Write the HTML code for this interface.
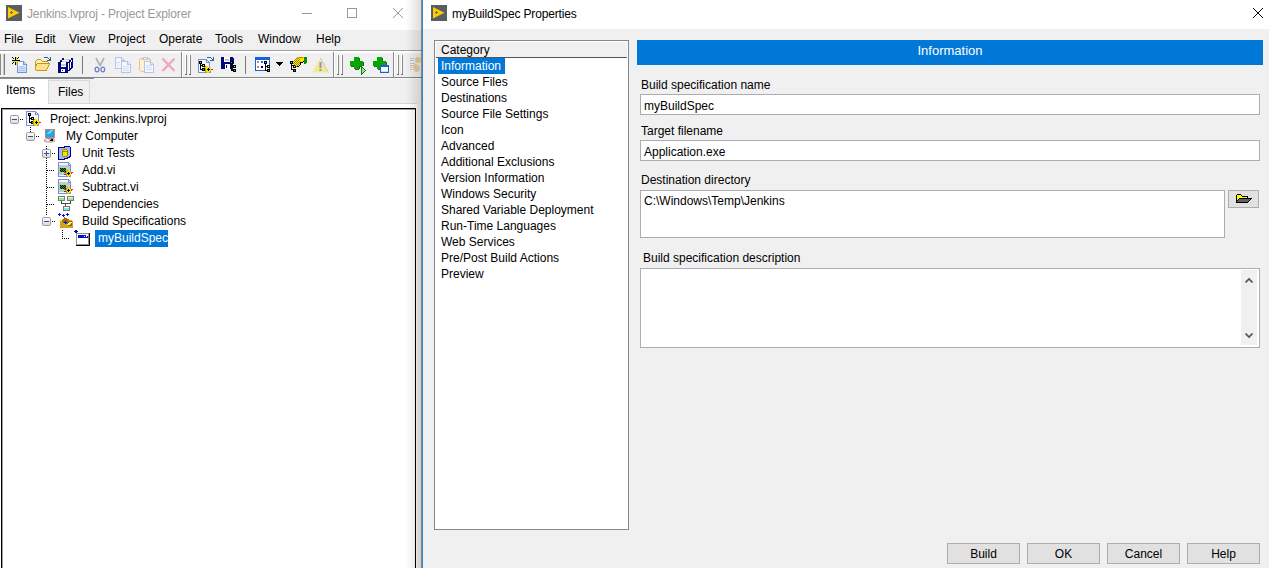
<!DOCTYPE html>
<html><head><meta charset="utf-8">
<style>
*{margin:0;padding:0;box-sizing:border-box}
html,body{width:1269px;height:568px;overflow:hidden;background:#fff;font-family:"Liberation Sans",sans-serif;font-size:12px;color:#000}
.a{position:absolute;display:block}
.t{position:absolute;white-space:nowrap;line-height:14px}
</style></head><body>
<div class="a" style="left:0px;top:0px;width:422px;height:30px;background:#fff"></div>
<svg class="a" style="left:6px;top:5px" width="16" height="16" viewBox="0 0 16 16"><rect x="0" y="0" width="16" height="16" fill="#5a5d61"/><path d="M2 2 L13.5 7.75 L2 13.5 Z" fill="#ffcc00"/><path d="M4 7.5h3M5.5 6v3" stroke="#6a6a6a" stroke-width="1"/></svg>
<div class="t" style="left:27px;top:7px;color:#999;letter-spacing:-0.14px">Jenkins.lvproj - Project Explorer</div>
<svg class="a" style="left:302px;top:13px" width="10" height="1" viewBox="0 0 10 1" shape-rendering="crispEdges"><rect width="10" height="1" fill="#999"/></svg>
<svg class="a" style="left:347px;top:8px" width="10" height="10" viewBox="0 0 10 10" shape-rendering="crispEdges"><rect x="0.5" y="0.5" width="9" height="9" fill="none" stroke="#999"/></svg>
<svg class="a" style="left:393px;top:8px" width="10" height="10" viewBox="0 0 10 10"><path d="M0 0L10 10M10 0L0 10" stroke="#999" stroke-width="1"/></svg>
<div class="a" style="left:0px;top:30px;width:422px;height:20px;background:#f0f0f0"></div>
<div class="t" style="left:4px;top:32px;">File</div>
<div class="t" style="left:35px;top:32px;">Edit</div>
<div class="t" style="left:69px;top:32px;">View</div>
<div class="t" style="left:108px;top:32px;">Project</div>
<div class="t" style="left:159px;top:32px;">Operate</div>
<div class="t" style="left:215px;top:32px;">Tools</div>
<div class="t" style="left:258px;top:32px;">Window</div>
<div class="t" style="left:316px;top:32px;">Help</div>
<div class="a" style="left:0px;top:50px;width:422px;height:1px;background:#a0a0a0"></div>
<div class="a" style="left:0px;top:51px;width:422px;height:2px;background:#fff"></div>
<div class="a" style="left:0px;top:53px;width:422px;height:24px;background:#f0f0f0"></div>
<div class="a" style="left:0px;top:77px;width:422px;height:1px;background:#858585"></div>
<div class="a" style="left:0px;top:54px;width:1px;height:21px;background:#8a8a8a"></div>
<div class="a" style="left:3px;top:54px;width:1px;height:21px;background:#c8c8c8"></div>
<div class="a" style="left:4px;top:54px;width:1px;height:21px;background:#7a7a7a"></div>
<div class="a" style="left:181px;top:52px;width:1px;height:25px;background:#8a8a8a"></div>
<div class="a" style="left:182px;top:52px;width:1px;height:25px;background:#fff"></div>
<div class="a" style="left:333px;top:52px;width:1px;height:25px;background:#8a8a8a"></div>
<div class="a" style="left:334px;top:52px;width:1px;height:25px;background:#fff"></div>
<div class="a" style="left:393px;top:52px;width:1px;height:25px;background:#8a8a8a"></div>
<div class="a" style="left:394px;top:52px;width:1px;height:25px;background:#fff"></div>
<div class="a" style="left:186px;top:55px;width:1px;height:20px;background:#8a8a8a"></div>
<div class="a" style="left:185px;top:55px;width:1px;height:20px;background:#fff"></div>
<div class="a" style="left:185px;top:74px;width:2px;height:1px;background:#6a6a6a"></div>
<div class="a" style="left:190px;top:55px;width:1px;height:20px;background:#8a8a8a"></div>
<div class="a" style="left:189px;top:55px;width:1px;height:20px;background:#fff"></div>
<div class="a" style="left:189px;top:74px;width:2px;height:1px;background:#6a6a6a"></div>
<div class="a" style="left:338px;top:55px;width:1px;height:20px;background:#8a8a8a"></div>
<div class="a" style="left:337px;top:55px;width:1px;height:20px;background:#fff"></div>
<div class="a" style="left:337px;top:74px;width:2px;height:1px;background:#6a6a6a"></div>
<div class="a" style="left:342px;top:55px;width:1px;height:20px;background:#8a8a8a"></div>
<div class="a" style="left:341px;top:55px;width:1px;height:20px;background:#fff"></div>
<div class="a" style="left:341px;top:74px;width:2px;height:1px;background:#6a6a6a"></div>
<div class="a" style="left:398px;top:55px;width:1px;height:20px;background:#8a8a8a"></div>
<div class="a" style="left:397px;top:55px;width:1px;height:20px;background:#fff"></div>
<div class="a" style="left:397px;top:74px;width:2px;height:1px;background:#6a6a6a"></div>
<div class="a" style="left:402px;top:55px;width:1px;height:20px;background:#8a8a8a"></div>
<div class="a" style="left:401px;top:55px;width:1px;height:20px;background:#fff"></div>
<div class="a" style="left:401px;top:74px;width:2px;height:1px;background:#6a6a6a"></div>
<div class="a" style="left:82px;top:56px;width:1px;height:18px;background:#7a7a7a"></div>
<div class="a" style="left:245px;top:56px;width:1px;height:18px;background:#7a7a7a"></div>
<svg class="a" style="left:10px;top:55px" width="20" height="18" viewBox="0 0 20 18" shape-rendering="crispEdges"><rect x="2" y="2" width="1" height="1" fill="#000"/><rect x="5" y="2" width="1" height="1" fill="#000"/><rect x="6" y="2" width="1" height="1" fill="#f4e400"/><rect x="8" y="2" width="1" height="1" fill="#000"/><rect x="3" y="3" width="1" height="1" fill="#000"/><rect x="5" y="3" width="1" height="1" fill="#000"/><rect x="6" y="3" width="1" height="1" fill="#f4e400"/><rect x="7" y="3" width="1" height="1" fill="#000"/><rect x="5" y="4" width="1" height="1" fill="#000"/><rect x="6" y="4" width="1" height="1" fill="#f4e400"/><rect x="2" y="5" width="8" height="1" fill="#000"/><rect x="2" y="6" width="7" height="1" fill="#f4e400"/><rect x="9" y="6" width="5" height="1" fill="#7b8fd4"/><rect x="3" y="7" width="1" height="1" fill="#000"/><rect x="5" y="7" width="1" height="1" fill="#000"/><rect x="6" y="7" width="1" height="1" fill="#f4e400"/><rect x="7" y="7" width="1" height="1" fill="#7b8fd4"/><rect x="8" y="7" width="5" height="1" fill="#f2f6ff"/><rect x="13" y="7" width="2" height="1" fill="#7b8fd4"/><rect x="2" y="8" width="1" height="1" fill="#000"/><rect x="5" y="8" width="1" height="1" fill="#000"/><rect x="6" y="8" width="1" height="1" fill="#f4e400"/><rect x="7" y="8" width="1" height="1" fill="#7b8fd4"/><rect x="8" y="8" width="5" height="1" fill="#f2f6ff"/><rect x="13" y="8" width="1" height="1" fill="#7b8fd4"/><rect x="14" y="8" width="1" height="1" fill="#f2f6ff"/><rect x="15" y="8" width="1" height="1" fill="#7b8fd4"/><rect x="5" y="9" width="1" height="1" fill="#000"/><rect x="6" y="9" width="1" height="1" fill="#f4e400"/><rect x="7" y="9" width="1" height="1" fill="#7b8fd4"/><rect x="8" y="9" width="5" height="1" fill="#f2f6ff"/><rect x="13" y="9" width="4" height="1" fill="#7b8fd4"/><rect x="7" y="10" width="1" height="1" fill="#7b8fd4"/><rect x="8" y="10" width="8" height="1" fill="#f2f6ff"/><rect x="16" y="10" width="1" height="1" fill="#7b8fd4"/><rect x="7" y="11" width="1" height="1" fill="#7b8fd4"/><rect x="8" y="11" width="1" height="1" fill="#f2f6ff"/><rect x="9" y="11" width="6" height="1" fill="#a8c4ec"/><rect x="15" y="11" width="1" height="1" fill="#f2f6ff"/><rect x="16" y="11" width="1" height="1" fill="#7b8fd4"/><rect x="7" y="12" width="1" height="1" fill="#7b8fd4"/><rect x="8" y="12" width="8" height="1" fill="#d4e2f8"/><rect x="16" y="12" width="1" height="1" fill="#7b8fd4"/><rect x="7" y="13" width="1" height="1" fill="#7b8fd4"/><rect x="8" y="13" width="1" height="1" fill="#d4e2f8"/><rect x="9" y="13" width="6" height="1" fill="#a8c4ec"/><rect x="15" y="13" width="1" height="1" fill="#d4e2f8"/><rect x="16" y="13" width="1" height="1" fill="#7b8fd4"/><rect x="7" y="14" width="1" height="1" fill="#7b8fd4"/><rect x="8" y="14" width="8" height="1" fill="#d4e2f8"/><rect x="16" y="14" width="1" height="1" fill="#7b8fd4"/><rect x="7" y="15" width="1" height="1" fill="#7b8fd4"/><rect x="8" y="15" width="1" height="1" fill="#d4e2f8"/><rect x="9" y="15" width="6" height="1" fill="#a8c4ec"/><rect x="15" y="15" width="1" height="1" fill="#d4e2f8"/><rect x="16" y="15" width="1" height="1" fill="#7b8fd4"/><rect x="7" y="16" width="1" height="1" fill="#7b8fd4"/><rect x="8" y="16" width="8" height="1" fill="#d4e2f8"/><rect x="16" y="16" width="1" height="1" fill="#7b8fd4"/><rect x="7" y="17" width="10" height="1" fill="#7b8fd4"/></svg>
<svg class="a" style="left:33px;top:55px" width="20" height="16" viewBox="0 0 20 16" shape-rendering="crispEdges"><rect x="11" y="2" width="4" height="1" fill="#1e6e96"/><rect x="17" y="2" width="1" height="1" fill="#1e6e96"/><rect x="15" y="3" width="1" height="1" fill="#1e6e96"/><rect x="17" y="3" width="1" height="1" fill="#1e6e96"/><rect x="4" y="4" width="4" height="1" fill="#c89418"/><rect x="16" y="4" width="2" height="1" fill="#1e6e96"/><rect x="3" y="5" width="1" height="1" fill="#c89418"/><rect x="4" y="5" width="4" height="1" fill="#fff2b0"/><rect x="8" y="5" width="1" height="1" fill="#c89418"/><rect x="14" y="5" width="4" height="1" fill="#1e6e96"/><rect x="2" y="6" width="1" height="1" fill="#c89418"/><rect x="3" y="6" width="6" height="1" fill="#fff2b0"/><rect x="9" y="6" width="6" height="1" fill="#c89418"/><rect x="2" y="7" width="1" height="1" fill="#c89418"/><rect x="3" y="7" width="12" height="1" fill="#fff2b0"/><rect x="15" y="7" width="1" height="1" fill="#c89418"/><rect x="2" y="8" width="1" height="1" fill="#c89418"/><rect x="3" y="8" width="1" height="1" fill="#fff2b0"/><rect x="4" y="8" width="13" height="1" fill="#c89418"/><rect x="2" y="9" width="2" height="1" fill="#c89418"/><rect x="4" y="9" width="12" height="1" fill="#fbe38a"/><rect x="16" y="9" width="1" height="1" fill="#c89418"/><rect x="2" y="10" width="2" height="1" fill="#c89418"/><rect x="4" y="10" width="11" height="1" fill="#fbe38a"/><rect x="15" y="10" width="1" height="1" fill="#c89418"/><rect x="2" y="11" width="1" height="1" fill="#c89418"/><rect x="3" y="11" width="12" height="1" fill="#fbe38a"/><rect x="15" y="11" width="1" height="1" fill="#c89418"/><rect x="2" y="12" width="1" height="1" fill="#c89418"/><rect x="3" y="12" width="11" height="1" fill="#fbe38a"/><rect x="14" y="12" width="1" height="1" fill="#c89418"/><rect x="2" y="13" width="1" height="1" fill="#c89418"/><rect x="3" y="13" width="11" height="1" fill="#fbe38a"/><rect x="14" y="13" width="1" height="1" fill="#c89418"/><rect x="2" y="14" width="1" height="1" fill="#c89418"/><rect x="3" y="14" width="10" height="1" fill="#fbe38a"/><rect x="13" y="14" width="1" height="1" fill="#c89418"/><rect x="3" y="15" width="11" height="1" fill="#c89418"/></svg>
<svg class="a" style="left:56px;top:55px" width="20" height="18" viewBox="0 0 20 18" shape-rendering="crispEdges"><rect x="6" y="3" width="2" height="1" fill="#00087a"/><rect x="8" y="3" width="7" height="1" fill="#ffffff"/><rect x="15" y="3" width="2" height="1" fill="#00087a"/><rect x="6" y="4" width="2" height="1" fill="#00087a"/><rect x="8" y="4" width="7" height="1" fill="#c8c8d0"/><rect x="15" y="4" width="2" height="1" fill="#00087a"/><rect x="4" y="5" width="2" height="1" fill="#00087a"/><rect x="6" y="5" width="7" height="1" fill="#ffffff"/><rect x="13" y="5" width="2" height="1" fill="#00087a"/><rect x="15" y="5" width="1" height="1" fill="#ffffff"/><rect x="16" y="5" width="1" height="1" fill="#00087a"/><rect x="4" y="6" width="2" height="1" fill="#00087a"/><rect x="6" y="6" width="7" height="1" fill="#c8c8d0"/><rect x="13" y="6" width="2" height="1" fill="#00087a"/><rect x="15" y="6" width="1" height="1" fill="#ffffff"/><rect x="16" y="6" width="1" height="1" fill="#00087a"/><rect x="2" y="7" width="3" height="1" fill="#00087a"/><rect x="5" y="7" width="5" height="1" fill="#ffffff"/><rect x="10" y="7" width="4" height="1" fill="#00087a"/><rect x="14" y="7" width="1" height="1" fill="#ffffff"/><rect x="15" y="7" width="2" height="1" fill="#00087a"/><rect x="2" y="8" width="3" height="1" fill="#00087a"/><rect x="5" y="8" width="5" height="1" fill="#ffffff"/><rect x="10" y="8" width="2" height="1" fill="#00087a"/><rect x="12" y="8" width="1" height="1" fill="#ffffff"/><rect x="13" y="8" width="1" height="1" fill="#00087a"/><rect x="14" y="8" width="1" height="1" fill="#ffffff"/><rect x="15" y="8" width="2" height="1" fill="#00087a"/><rect x="2" y="9" width="3" height="1" fill="#00087a"/><rect x="5" y="9" width="5" height="1" fill="#c8c8d0"/><rect x="10" y="9" width="2" height="1" fill="#00087a"/><rect x="12" y="9" width="1" height="1" fill="#ffffff"/><rect x="13" y="9" width="1" height="1" fill="#00087a"/><rect x="14" y="9" width="1" height="1" fill="#ffffff"/><rect x="15" y="9" width="2" height="1" fill="#00087a"/><rect x="2" y="10" width="3" height="1" fill="#00087a"/><rect x="5" y="10" width="5" height="1" fill="#c8c8d0"/><rect x="10" y="10" width="2" height="1" fill="#00087a"/><rect x="12" y="10" width="1" height="1" fill="#ffffff"/><rect x="13" y="10" width="1" height="1" fill="#00087a"/><rect x="14" y="10" width="1" height="1" fill="#ffffff"/><rect x="15" y="10" width="2" height="1" fill="#00087a"/><rect x="2" y="11" width="3" height="1" fill="#00087a"/><rect x="5" y="11" width="5" height="1" fill="#ffffff"/><rect x="10" y="11" width="2" height="1" fill="#00087a"/><rect x="12" y="11" width="1" height="1" fill="#ffffff"/><rect x="13" y="11" width="1" height="1" fill="#00087a"/><rect x="14" y="11" width="1" height="1" fill="#ffffff"/><rect x="15" y="11" width="2" height="1" fill="#00087a"/><rect x="2" y="12" width="10" height="1" fill="#00087a"/><rect x="12" y="12" width="1" height="1" fill="#ffffff"/><rect x="13" y="12" width="1" height="1" fill="#00087a"/><rect x="14" y="12" width="1" height="1" fill="#ffffff"/><rect x="15" y="12" width="2" height="1" fill="#00087a"/><rect x="2" y="13" width="10" height="1" fill="#00087a"/><rect x="12" y="13" width="1" height="1" fill="#ffffff"/><rect x="13" y="13" width="3" height="1" fill="#00087a"/><rect x="2" y="14" width="3" height="1" fill="#00087a"/><rect x="5" y="14" width="4" height="1" fill="#ffffff"/><rect x="9" y="14" width="3" height="1" fill="#00087a"/><rect x="12" y="14" width="1" height="1" fill="#ffffff"/><rect x="13" y="14" width="2" height="1" fill="#00087a"/><rect x="2" y="15" width="3" height="1" fill="#00087a"/><rect x="5" y="15" width="1" height="1" fill="#ffffff"/><rect x="6" y="15" width="1" height="1" fill="#00087a"/><rect x="7" y="15" width="2" height="1" fill="#ffffff"/><rect x="9" y="15" width="5" height="1" fill="#00087a"/><rect x="2" y="16" width="3" height="1" fill="#00087a"/><rect x="5" y="16" width="4" height="1" fill="#ffffff"/><rect x="9" y="16" width="3" height="1" fill="#00087a"/><rect x="2" y="17" width="10" height="1" fill="#00087a"/></svg>
<svg class="a" style="left:92px;top:55px" width="20" height="20" viewBox="0 0 20 20"><path d="M4 3L8.3 11M12 3L7.7 11" stroke="#b4b4b4" stroke-width="1.8" fill="none"/><ellipse cx="5" cy="14.5" rx="1.9" ry="2.4" fill="none" stroke="#6e80c8" stroke-width="1.3"/><ellipse cx="10.8" cy="14.5" rx="1.9" ry="2.4" fill="none" stroke="#6e80c8" stroke-width="1.3"/></svg>
<svg class="a" style="left:113px;top:55px" width="20" height="18" viewBox="0 0 20 18" shape-rendering="crispEdges"><rect x="2" y="2" width="7" height="1" fill="#bcc4e4"/><rect x="2" y="3" width="1" height="1" fill="#bcc4e4"/><rect x="3" y="3" width="5" height="1" fill="#f2f6ff"/><rect x="8" y="3" width="2" height="1" fill="#bcc4e4"/><rect x="2" y="4" width="1" height="1" fill="#bcc4e4"/><rect x="3" y="4" width="5" height="1" fill="#f2f6ff"/><rect x="8" y="4" width="1" height="1" fill="#bcc4e4"/><rect x="9" y="4" width="1" height="1" fill="#f2f6ff"/><rect x="10" y="4" width="1" height="1" fill="#bcc4e4"/><rect x="2" y="5" width="1" height="1" fill="#bcc4e4"/><rect x="3" y="5" width="5" height="1" fill="#f2f6ff"/><rect x="8" y="5" width="4" height="1" fill="#bcc4e4"/><rect x="2" y="6" width="1" height="1" fill="#bcc4e4"/><rect x="3" y="6" width="5" height="1" fill="#f2f6ff"/><rect x="8" y="6" width="7" height="1" fill="#bcc4e4"/><rect x="2" y="7" width="1" height="1" fill="#bcc4e4"/><rect x="3" y="7" width="4" height="1" fill="#cfe0f6"/><rect x="7" y="7" width="1" height="1" fill="#f2f6ff"/><rect x="8" y="7" width="1" height="1" fill="#bcc4e4"/><rect x="9" y="7" width="5" height="1" fill="#f2f6ff"/><rect x="14" y="7" width="2" height="1" fill="#bcc4e4"/><rect x="2" y="8" width="1" height="1" fill="#bcc4e4"/><rect x="3" y="8" width="5" height="1" fill="#f2f6ff"/><rect x="8" y="8" width="1" height="1" fill="#bcc4e4"/><rect x="9" y="8" width="5" height="1" fill="#f2f6ff"/><rect x="14" y="8" width="1" height="1" fill="#bcc4e4"/><rect x="15" y="8" width="1" height="1" fill="#f2f6ff"/><rect x="16" y="8" width="1" height="1" fill="#bcc4e4"/><rect x="2" y="9" width="1" height="1" fill="#bcc4e4"/><rect x="3" y="9" width="5" height="1" fill="#f2f6ff"/><rect x="8" y="9" width="1" height="1" fill="#bcc4e4"/><rect x="9" y="9" width="5" height="1" fill="#f2f6ff"/><rect x="14" y="9" width="4" height="1" fill="#bcc4e4"/><rect x="2" y="10" width="1" height="1" fill="#bcc4e4"/><rect x="3" y="10" width="1" height="1" fill="#f2f6ff"/><rect x="4" y="10" width="2" height="1" fill="#cfe0f6"/><rect x="6" y="10" width="2" height="1" fill="#f2f6ff"/><rect x="8" y="10" width="1" height="1" fill="#bcc4e4"/><rect x="9" y="10" width="8" height="1" fill="#f2f6ff"/><rect x="17" y="10" width="1" height="1" fill="#bcc4e4"/><rect x="2" y="11" width="1" height="1" fill="#bcc4e4"/><rect x="3" y="11" width="5" height="1" fill="#f2f6ff"/><rect x="8" y="11" width="1" height="1" fill="#bcc4e4"/><rect x="9" y="11" width="1" height="1" fill="#f2f6ff"/><rect x="10" y="11" width="6" height="1" fill="#cfe0f6"/><rect x="16" y="11" width="1" height="1" fill="#f2f6ff"/><rect x="17" y="11" width="1" height="1" fill="#bcc4e4"/><rect x="2" y="12" width="1" height="1" fill="#bcc4e4"/><rect x="3" y="12" width="5" height="1" fill="#f2f6ff"/><rect x="8" y="12" width="1" height="1" fill="#bcc4e4"/><rect x="9" y="12" width="8" height="1" fill="#f2f6ff"/><rect x="17" y="12" width="1" height="1" fill="#bcc4e4"/><rect x="2" y="13" width="7" height="1" fill="#bcc4e4"/><rect x="9" y="13" width="1" height="1" fill="#f2f6ff"/><rect x="10" y="13" width="6" height="1" fill="#cfe0f6"/><rect x="16" y="13" width="1" height="1" fill="#f2f6ff"/><rect x="17" y="13" width="1" height="1" fill="#bcc4e4"/><rect x="8" y="14" width="1" height="1" fill="#bcc4e4"/><rect x="9" y="14" width="8" height="1" fill="#f2f6ff"/><rect x="17" y="14" width="1" height="1" fill="#bcc4e4"/><rect x="8" y="15" width="1" height="1" fill="#bcc4e4"/><rect x="9" y="15" width="1" height="1" fill="#f2f6ff"/><rect x="10" y="15" width="6" height="1" fill="#cfe0f6"/><rect x="16" y="15" width="1" height="1" fill="#f2f6ff"/><rect x="17" y="15" width="1" height="1" fill="#bcc4e4"/><rect x="8" y="16" width="1" height="1" fill="#bcc4e4"/><rect x="9" y="16" width="8" height="1" fill="#f2f6ff"/><rect x="17" y="16" width="1" height="1" fill="#bcc4e4"/><rect x="8" y="17" width="10" height="1" fill="#bcc4e4"/></svg>
<svg class="a" style="left:136px;top:55px" width="20" height="18" viewBox="0 0 20 18" shape-rendering="crispEdges"><rect x="7" y="2" width="5" height="1" fill="#c4c4c4"/><rect x="4" y="3" width="2" height="1" fill="#e2c690"/><rect x="6" y="3" width="2" height="1" fill="#c4c4c4"/><rect x="8" y="3" width="3" height="1" fill="#f2f6ff"/><rect x="11" y="3" width="2" height="1" fill="#c4c4c4"/><rect x="13" y="3" width="1" height="1" fill="#e2c690"/><rect x="3" y="4" width="1" height="1" fill="#e2c690"/><rect x="4" y="4" width="2" height="1" fill="#fbf3cf"/><rect x="6" y="4" width="6" height="1" fill="#c4c4c4"/><rect x="12" y="4" width="1" height="1" fill="#fbf3cf"/><rect x="13" y="4" width="2" height="1" fill="#e2c690"/><rect x="3" y="5" width="1" height="1" fill="#e2c690"/><rect x="4" y="5" width="10" height="1" fill="#fbf3cf"/><rect x="14" y="5" width="1" height="1" fill="#e2c690"/><rect x="3" y="6" width="1" height="1" fill="#e2c690"/><rect x="4" y="6" width="4" height="1" fill="#fbf3cf"/><rect x="8" y="6" width="7" height="1" fill="#bcc4e4"/><rect x="3" y="7" width="1" height="1" fill="#e2c690"/><rect x="4" y="7" width="4" height="1" fill="#fbf3cf"/><rect x="8" y="7" width="1" height="1" fill="#bcc4e4"/><rect x="9" y="7" width="5" height="1" fill="#f2f6ff"/><rect x="14" y="7" width="2" height="1" fill="#bcc4e4"/><rect x="3" y="8" width="1" height="1" fill="#e2c690"/><rect x="4" y="8" width="4" height="1" fill="#fbf3cf"/><rect x="8" y="8" width="1" height="1" fill="#bcc4e4"/><rect x="9" y="8" width="5" height="1" fill="#f2f6ff"/><rect x="14" y="8" width="1" height="1" fill="#bcc4e4"/><rect x="15" y="8" width="1" height="1" fill="#f2f6ff"/><rect x="16" y="8" width="1" height="1" fill="#bcc4e4"/><rect x="3" y="9" width="1" height="1" fill="#e2c690"/><rect x="4" y="9" width="4" height="1" fill="#fbf3cf"/><rect x="8" y="9" width="1" height="1" fill="#bcc4e4"/><rect x="9" y="9" width="5" height="1" fill="#f2f6ff"/><rect x="14" y="9" width="4" height="1" fill="#bcc4e4"/><rect x="3" y="10" width="1" height="1" fill="#e2c690"/><rect x="4" y="10" width="4" height="1" fill="#fbf3cf"/><rect x="8" y="10" width="1" height="1" fill="#bcc4e4"/><rect x="9" y="10" width="1" height="1" fill="#f2f6ff"/><rect x="10" y="10" width="6" height="1" fill="#cfe0f6"/><rect x="16" y="10" width="1" height="1" fill="#f2f6ff"/><rect x="17" y="10" width="1" height="1" fill="#bcc4e4"/><rect x="3" y="11" width="1" height="1" fill="#e2c690"/><rect x="4" y="11" width="4" height="1" fill="#fbf3cf"/><rect x="8" y="11" width="1" height="1" fill="#bcc4e4"/><rect x="9" y="11" width="8" height="1" fill="#f2f6ff"/><rect x="17" y="11" width="1" height="1" fill="#bcc4e4"/><rect x="3" y="12" width="1" height="1" fill="#e2c690"/><rect x="4" y="12" width="4" height="1" fill="#fbf3cf"/><rect x="8" y="12" width="1" height="1" fill="#bcc4e4"/><rect x="9" y="12" width="1" height="1" fill="#f2f6ff"/><rect x="10" y="12" width="6" height="1" fill="#cfe0f6"/><rect x="16" y="12" width="1" height="1" fill="#f2f6ff"/><rect x="17" y="12" width="1" height="1" fill="#bcc4e4"/><rect x="3" y="13" width="1" height="1" fill="#e2c690"/><rect x="4" y="13" width="4" height="1" fill="#fbf3cf"/><rect x="8" y="13" width="1" height="1" fill="#bcc4e4"/><rect x="9" y="13" width="8" height="1" fill="#f2f6ff"/><rect x="17" y="13" width="1" height="1" fill="#bcc4e4"/><rect x="3" y="14" width="1" height="1" fill="#e2c690"/><rect x="4" y="14" width="4" height="1" fill="#fbf3cf"/><rect x="8" y="14" width="1" height="1" fill="#bcc4e4"/><rect x="9" y="14" width="1" height="1" fill="#f2f6ff"/><rect x="10" y="14" width="6" height="1" fill="#cfe0f6"/><rect x="16" y="14" width="1" height="1" fill="#f2f6ff"/><rect x="17" y="14" width="1" height="1" fill="#bcc4e4"/><rect x="4" y="15" width="1" height="1" fill="#e2c690"/><rect x="5" y="15" width="3" height="1" fill="#fbf3cf"/><rect x="8" y="15" width="1" height="1" fill="#bcc4e4"/><rect x="9" y="15" width="8" height="1" fill="#f2f6ff"/><rect x="17" y="15" width="1" height="1" fill="#bcc4e4"/><rect x="5" y="16" width="3" height="1" fill="#e2c690"/><rect x="8" y="16" width="1" height="1" fill="#bcc4e4"/><rect x="9" y="16" width="8" height="1" fill="#f2f6ff"/><rect x="17" y="16" width="1" height="1" fill="#bcc4e4"/><rect x="8" y="17" width="10" height="1" fill="#bcc4e4"/></svg>
<svg class="a" style="left:159px;top:55px" width="20" height="20" viewBox="0 0 20 20"><path d="M3.5 3.5L15.5 16M15.5 3.5L3.5 16" stroke="#f2a6ba" stroke-width="2.4"/></svg>
<svg class="a" style="left:196px;top:55px" width="20" height="18" viewBox="0 0 20 18" shape-rendering="crispEdges"><rect x="11" y="2" width="4" height="1" fill="#1e6e96"/><rect x="17" y="2" width="1" height="1" fill="#1e6e96"/><rect x="15" y="3" width="1" height="1" fill="#1e6e96"/><rect x="17" y="3" width="1" height="1" fill="#1e6e96"/><rect x="2" y="4" width="9" height="1" fill="#7b8fd4"/><rect x="16" y="4" width="2" height="1" fill="#1e6e96"/><rect x="2" y="5" width="1" height="1" fill="#7b8fd4"/><rect x="3" y="5" width="7" height="1" fill="#f2f6ff"/><rect x="10" y="5" width="2" height="1" fill="#7b8fd4"/><rect x="14" y="5" width="4" height="1" fill="#1e6e96"/><rect x="2" y="6" width="1" height="1" fill="#7b8fd4"/><rect x="3" y="6" width="3" height="1" fill="#000"/><rect x="6" y="6" width="4" height="1" fill="#f2f6ff"/><rect x="10" y="6" width="1" height="1" fill="#7b8fd4"/><rect x="11" y="6" width="1" height="1" fill="#f2f6ff"/><rect x="12" y="6" width="1" height="1" fill="#7b8fd4"/><rect x="2" y="7" width="1" height="1" fill="#7b8fd4"/><rect x="3" y="7" width="1" height="1" fill="#000"/><rect x="4" y="7" width="1" height="1" fill="#00e0f0"/><rect x="5" y="7" width="1" height="1" fill="#000"/><rect x="6" y="7" width="4" height="1" fill="#f2f6ff"/><rect x="10" y="7" width="4" height="1" fill="#7b8fd4"/><rect x="2" y="8" width="1" height="1" fill="#7b8fd4"/><rect x="3" y="8" width="3" height="1" fill="#000"/><rect x="6" y="8" width="7" height="1" fill="#f2f6ff"/><rect x="13" y="8" width="1" height="1" fill="#7b8fd4"/><rect x="2" y="9" width="1" height="1" fill="#7b8fd4"/><rect x="3" y="9" width="1" height="1" fill="#f2f6ff"/><rect x="4" y="9" width="1" height="1" fill="#000"/><rect x="5" y="9" width="1" height="1" fill="#f2f6ff"/><rect x="6" y="9" width="3" height="1" fill="#000"/><rect x="9" y="9" width="4" height="1" fill="#f2f6ff"/><rect x="13" y="9" width="1" height="1" fill="#7b8fd4"/><rect x="2" y="10" width="1" height="1" fill="#7b8fd4"/><rect x="3" y="10" width="1" height="1" fill="#f2f6ff"/><rect x="4" y="10" width="3" height="1" fill="#000"/><rect x="7" y="10" width="1" height="1" fill="#f0f000"/><rect x="8" y="10" width="1" height="1" fill="#000"/><rect x="9" y="10" width="4" height="1" fill="#f2f6ff"/><rect x="13" y="10" width="1" height="1" fill="#7b8fd4"/><rect x="2" y="11" width="1" height="1" fill="#7b8fd4"/><rect x="3" y="11" width="1" height="1" fill="#f2f6ff"/><rect x="4" y="11" width="1" height="1" fill="#000"/><rect x="5" y="11" width="1" height="1" fill="#f2f6ff"/><rect x="6" y="11" width="3" height="1" fill="#000"/><rect x="9" y="11" width="1" height="1" fill="#c0a000"/><rect x="10" y="11" width="2" height="1" fill="#f4e400"/><rect x="12" y="11" width="1" height="1" fill="#f2f6ff"/><rect x="13" y="11" width="1" height="1" fill="#7b8fd4"/><rect x="2" y="12" width="1" height="1" fill="#7b8fd4"/><rect x="3" y="12" width="1" height="1" fill="#f2f6ff"/><rect x="4" y="12" width="1" height="1" fill="#000"/><rect x="5" y="12" width="3" height="1" fill="#f2f6ff"/><rect x="8" y="12" width="1" height="1" fill="#c0a000"/><rect x="9" y="12" width="4" height="1" fill="#f4e400"/><rect x="13" y="12" width="1" height="1" fill="#7b8fd4"/><rect x="2" y="13" width="1" height="1" fill="#7b8fd4"/><rect x="3" y="13" width="1" height="1" fill="#f2f6ff"/><rect x="4" y="13" width="1" height="1" fill="#000"/><rect x="5" y="13" width="1" height="1" fill="#f2f6ff"/><rect x="6" y="13" width="3" height="1" fill="#000"/><rect x="9" y="13" width="1" height="1" fill="#c0a000"/><rect x="10" y="13" width="2" height="1" fill="#f4e400"/><rect x="12" y="13" width="1" height="1" fill="#000"/><rect x="13" y="13" width="2" height="1" fill="#f4e400"/><rect x="2" y="14" width="1" height="1" fill="#7b8fd4"/><rect x="3" y="14" width="1" height="1" fill="#f2f6ff"/><rect x="4" y="14" width="3" height="1" fill="#000"/><rect x="7" y="14" width="1" height="1" fill="#00d800"/><rect x="8" y="14" width="1" height="1" fill="#000"/><rect x="9" y="14" width="1" height="1" fill="#c0a000"/><rect x="10" y="14" width="1" height="1" fill="#f4e400"/><rect x="11" y="14" width="3" height="1" fill="#000"/><rect x="14" y="14" width="1" height="1" fill="#f4e400"/><rect x="15" y="14" width="2" height="1" fill="#ff2020"/><rect x="2" y="15" width="1" height="1" fill="#7b8fd4"/><rect x="3" y="15" width="3" height="1" fill="#f2f6ff"/><rect x="6" y="15" width="3" height="1" fill="#000"/><rect x="9" y="15" width="1" height="1" fill="#c0a000"/><rect x="10" y="15" width="2" height="1" fill="#f4e400"/><rect x="12" y="15" width="1" height="1" fill="#000"/><rect x="13" y="15" width="2" height="1" fill="#f4e400"/><rect x="2" y="16" width="1" height="1" fill="#7b8fd4"/><rect x="3" y="16" width="6" height="1" fill="#f2f6ff"/><rect x="9" y="16" width="1" height="1" fill="#c0a000"/><rect x="10" y="16" width="4" height="1" fill="#f4e400"/><rect x="14" y="16" width="1" height="1" fill="#7b8fd4"/><rect x="2" y="17" width="8" height="1" fill="#7b8fd4"/><rect x="10" y="17" width="1" height="1" fill="#c0a000"/><rect x="11" y="17" width="2" height="1" fill="#f4e400"/><rect x="13" y="17" width="2" height="1" fill="#7b8fd4"/></svg>
<svg class="a" style="left:219px;top:55px" width="20" height="17" viewBox="0 0 20 17" shape-rendering="crispEdges"><rect x="2" y="2" width="3" height="1" fill="#00087a"/><rect x="5" y="2" width="6" height="1" fill="#ffffff"/><rect x="11" y="2" width="3" height="1" fill="#00087a"/><rect x="2" y="3" width="3" height="1" fill="#00087a"/><rect x="5" y="3" width="6" height="1" fill="#ffffff"/><rect x="11" y="3" width="4" height="1" fill="#00087a"/><rect x="2" y="4" width="3" height="1" fill="#00087a"/><rect x="5" y="4" width="1" height="1" fill="#ffffff"/><rect x="6" y="4" width="4" height="1" fill="#c8c8d0"/><rect x="10" y="4" width="1" height="1" fill="#ffffff"/><rect x="11" y="4" width="4" height="1" fill="#00087a"/><rect x="2" y="5" width="3" height="1" fill="#00087a"/><rect x="5" y="5" width="1" height="1" fill="#ffffff"/><rect x="6" y="5" width="4" height="1" fill="#c8c8d0"/><rect x="10" y="5" width="1" height="1" fill="#ffffff"/><rect x="11" y="5" width="4" height="1" fill="#00087a"/><rect x="2" y="6" width="3" height="1" fill="#00087a"/><rect x="5" y="6" width="6" height="1" fill="#ffffff"/><rect x="11" y="6" width="3" height="1" fill="#000"/><rect x="14" y="6" width="1" height="1" fill="#00087a"/><rect x="2" y="7" width="9" height="1" fill="#00087a"/><rect x="11" y="7" width="1" height="1" fill="#000"/><rect x="12" y="7" width="1" height="1" fill="#00e0f0"/><rect x="13" y="7" width="1" height="1" fill="#000"/><rect x="14" y="7" width="1" height="1" fill="#00087a"/><rect x="2" y="8" width="9" height="1" fill="#00087a"/><rect x="11" y="8" width="3" height="1" fill="#000"/><rect x="14" y="8" width="1" height="1" fill="#00087a"/><rect x="2" y="9" width="4" height="1" fill="#00087a"/><rect x="6" y="9" width="5" height="1" fill="#ffffff"/><rect x="11" y="9" width="1" height="1" fill="#00087a"/><rect x="12" y="9" width="1" height="1" fill="#000"/><rect x="13" y="9" width="1" height="1" fill="#00087a"/><rect x="2" y="10" width="4" height="1" fill="#00087a"/><rect x="6" y="10" width="1" height="1" fill="#ffffff"/><rect x="7" y="10" width="1" height="1" fill="#00087a"/><rect x="8" y="10" width="3" height="1" fill="#ffffff"/><rect x="11" y="10" width="1" height="1" fill="#00087a"/><rect x="12" y="10" width="1" height="1" fill="#000"/><rect x="13" y="10" width="1" height="1" fill="#00087a"/><rect x="14" y="10" width="3" height="1" fill="#000"/><rect x="2" y="11" width="4" height="1" fill="#00087a"/><rect x="6" y="11" width="1" height="1" fill="#ffffff"/><rect x="7" y="11" width="1" height="1" fill="#00087a"/><rect x="8" y="11" width="3" height="1" fill="#ffffff"/><rect x="11" y="11" width="1" height="1" fill="#00087a"/><rect x="12" y="11" width="3" height="1" fill="#000"/><rect x="15" y="11" width="1" height="1" fill="#f0f000"/><rect x="16" y="11" width="1" height="1" fill="#000"/><rect x="2" y="12" width="4" height="1" fill="#00087a"/><rect x="6" y="12" width="1" height="1" fill="#ffffff"/><rect x="7" y="12" width="1" height="1" fill="#00087a"/><rect x="8" y="12" width="3" height="1" fill="#ffffff"/><rect x="11" y="12" width="1" height="1" fill="#00087a"/><rect x="12" y="12" width="1" height="1" fill="#000"/><rect x="13" y="12" width="1" height="1" fill="#00087a"/><rect x="14" y="12" width="3" height="1" fill="#000"/><rect x="2" y="13" width="4" height="1" fill="#00087a"/><rect x="6" y="13" width="5" height="1" fill="#ffffff"/><rect x="11" y="13" width="1" height="1" fill="#00087a"/><rect x="12" y="13" width="1" height="1" fill="#000"/><rect x="13" y="13" width="1" height="1" fill="#00087a"/><rect x="12" y="14" width="1" height="1" fill="#000"/><rect x="13" y="14" width="1" height="1" fill="#00087a"/><rect x="14" y="14" width="3" height="1" fill="#000"/><rect x="12" y="15" width="3" height="1" fill="#000"/><rect x="15" y="15" width="1" height="1" fill="#00d800"/><rect x="16" y="15" width="1" height="1" fill="#000"/><rect x="14" y="16" width="3" height="1" fill="#000"/></svg>
<svg class="a" style="left:253px;top:55px" width="20" height="17" viewBox="0 0 20 17" shape-rendering="crispEdges"><rect x="2" y="2" width="15" height="1" fill="#1c5ee0"/><rect x="2" y="3" width="15" height="1" fill="#1c5ee0"/><rect x="2" y="4" width="15" height="1" fill="#1c5ee0"/><rect x="2" y="5" width="1" height="1" fill="#1c5ee0"/><rect x="3" y="5" width="13" height="1" fill="#ffffff"/><rect x="16" y="5" width="1" height="1" fill="#1c5ee0"/><rect x="2" y="6" width="1" height="1" fill="#1c5ee0"/><rect x="3" y="6" width="1" height="1" fill="#ffffff"/><rect x="4" y="6" width="2" height="1" fill="#8898c8"/><rect x="6" y="6" width="2" height="1" fill="#ffffff"/><rect x="8" y="6" width="2" height="1" fill="#2070e0"/><rect x="10" y="6" width="1" height="1" fill="#ffffff"/><rect x="11" y="6" width="3" height="1" fill="#000"/><rect x="14" y="6" width="2" height="1" fill="#ffffff"/><rect x="16" y="6" width="1" height="1" fill="#1c5ee0"/><rect x="2" y="7" width="1" height="1" fill="#1c5ee0"/><rect x="3" y="7" width="1" height="1" fill="#ffffff"/><rect x="4" y="7" width="2" height="1" fill="#8898c8"/><rect x="6" y="7" width="2" height="1" fill="#ffffff"/><rect x="8" y="7" width="2" height="1" fill="#2070e0"/><rect x="10" y="7" width="1" height="1" fill="#ffffff"/><rect x="11" y="7" width="1" height="1" fill="#000"/><rect x="12" y="7" width="1" height="1" fill="#00e0f0"/><rect x="13" y="7" width="1" height="1" fill="#000"/><rect x="14" y="7" width="2" height="1" fill="#ffffff"/><rect x="16" y="7" width="1" height="1" fill="#1c5ee0"/><rect x="2" y="8" width="1" height="1" fill="#1c5ee0"/><rect x="3" y="8" width="8" height="1" fill="#ffffff"/><rect x="11" y="8" width="3" height="1" fill="#000"/><rect x="14" y="8" width="2" height="1" fill="#ffffff"/><rect x="16" y="8" width="1" height="1" fill="#1c5ee0"/><rect x="2" y="9" width="1" height="1" fill="#1c5ee0"/><rect x="3" y="9" width="9" height="1" fill="#ffffff"/><rect x="12" y="9" width="1" height="1" fill="#000"/><rect x="13" y="9" width="3" height="1" fill="#ffffff"/><rect x="16" y="9" width="1" height="1" fill="#1c5ee0"/><rect x="2" y="10" width="1" height="1" fill="#1c5ee0"/><rect x="3" y="10" width="9" height="1" fill="#ffffff"/><rect x="12" y="10" width="1" height="1" fill="#000"/><rect x="13" y="10" width="1" height="1" fill="#ffffff"/><rect x="14" y="10" width="3" height="1" fill="#000"/><rect x="2" y="11" width="1" height="1" fill="#1c5ee0"/><rect x="3" y="11" width="1" height="1" fill="#ffffff"/><rect x="4" y="11" width="2" height="1" fill="#e08020"/><rect x="6" y="11" width="2" height="1" fill="#ffffff"/><rect x="8" y="11" width="2" height="1" fill="#000088"/><rect x="10" y="11" width="2" height="1" fill="#ffffff"/><rect x="12" y="11" width="3" height="1" fill="#000"/><rect x="15" y="11" width="1" height="1" fill="#f0f000"/><rect x="16" y="11" width="1" height="1" fill="#000"/><rect x="2" y="12" width="1" height="1" fill="#1c5ee0"/><rect x="3" y="12" width="1" height="1" fill="#ffffff"/><rect x="4" y="12" width="2" height="1" fill="#e08020"/><rect x="6" y="12" width="2" height="1" fill="#ffffff"/><rect x="8" y="12" width="2" height="1" fill="#000088"/><rect x="10" y="12" width="2" height="1" fill="#ffffff"/><rect x="12" y="12" width="1" height="1" fill="#000"/><rect x="13" y="12" width="1" height="1" fill="#ffffff"/><rect x="14" y="12" width="3" height="1" fill="#000"/><rect x="2" y="13" width="1" height="1" fill="#1c5ee0"/><rect x="3" y="13" width="9" height="1" fill="#ffffff"/><rect x="12" y="13" width="1" height="1" fill="#000"/><rect x="13" y="13" width="3" height="1" fill="#ffffff"/><rect x="16" y="13" width="1" height="1" fill="#1c5ee0"/><rect x="2" y="14" width="1" height="1" fill="#1c5ee0"/><rect x="3" y="14" width="9" height="1" fill="#ffffff"/><rect x="12" y="14" width="1" height="1" fill="#000"/><rect x="13" y="14" width="1" height="1" fill="#ffffff"/><rect x="14" y="14" width="3" height="1" fill="#000"/><rect x="2" y="15" width="10" height="1" fill="#1c5ee0"/><rect x="12" y="15" width="3" height="1" fill="#000"/><rect x="15" y="15" width="1" height="1" fill="#00d800"/><rect x="16" y="15" width="1" height="1" fill="#000"/><rect x="14" y="16" width="3" height="1" fill="#000"/></svg>
<svg class="a" style="left:276px;top:62px" width="7" height="4" viewBox="0 0 7 4" shape-rendering="crispEdges"><rect x="0" y="0" width="7" height="1" fill="#000"/><rect x="1" y="1" width="5" height="1" fill="#000"/><rect x="2" y="2" width="3" height="1" fill="#000"/><rect x="3" y="3" width="1" height="1" fill="#000"/></svg>
<svg class="a" style="left:288px;top:55px" width="20" height="17" viewBox="0 0 20 17" shape-rendering="crispEdges"><rect x="9" y="2" width="1" height="1" fill="#a88018"/><rect x="10" y="2" width="1" height="1" fill="#f4e400"/><rect x="11" y="2" width="4" height="1" fill="#a88018"/><rect x="15" y="2" width="1" height="1" fill="#f4e400"/><rect x="16" y="2" width="3" height="1" fill="#108a10"/><rect x="8" y="3" width="1" height="1" fill="#a88018"/><rect x="9" y="3" width="1" height="1" fill="#f4e400"/><rect x="10" y="3" width="1" height="1" fill="#a88018"/><rect x="11" y="3" width="5" height="1" fill="#f4e400"/><rect x="16" y="3" width="3" height="1" fill="#108a10"/><rect x="7" y="4" width="1" height="1" fill="#a88018"/><rect x="8" y="4" width="1" height="1" fill="#f4e400"/><rect x="9" y="4" width="1" height="1" fill="#a88018"/><rect x="10" y="4" width="1" height="1" fill="#f4e400"/><rect x="11" y="4" width="1" height="1" fill="#a88018"/><rect x="12" y="4" width="4" height="1" fill="#f4e400"/><rect x="16" y="4" width="3" height="1" fill="#108a10"/><rect x="6" y="5" width="1" height="1" fill="#a88018"/><rect x="7" y="5" width="1" height="1" fill="#f4e400"/><rect x="8" y="5" width="1" height="1" fill="#a88018"/><rect x="9" y="5" width="1" height="1" fill="#f4e400"/><rect x="10" y="5" width="1" height="1" fill="#a88018"/><rect x="11" y="5" width="5" height="1" fill="#f4e400"/><rect x="16" y="5" width="3" height="1" fill="#108a10"/><rect x="2" y="6" width="3" height="1" fill="#000"/><rect x="5" y="6" width="1" height="1" fill="#a88018"/><rect x="6" y="6" width="1" height="1" fill="#f4e400"/><rect x="7" y="6" width="1" height="1" fill="#a88018"/><rect x="8" y="6" width="1" height="1" fill="#f4e400"/><rect x="9" y="6" width="1" height="1" fill="#a88018"/><rect x="10" y="6" width="1" height="1" fill="#f4e400"/><rect x="11" y="6" width="1" height="1" fill="#a88018"/><rect x="12" y="6" width="3" height="1" fill="#f4e400"/><rect x="15" y="6" width="1" height="1" fill="#000"/><rect x="16" y="6" width="3" height="1" fill="#108a10"/><rect x="2" y="7" width="1" height="1" fill="#000"/><rect x="3" y="7" width="1" height="1" fill="#00e0f0"/><rect x="4" y="7" width="1" height="1" fill="#000"/><rect x="5" y="7" width="1" height="1" fill="#f4e400"/><rect x="6" y="7" width="1" height="1" fill="#a88018"/><rect x="7" y="7" width="1" height="1" fill="#f4e400"/><rect x="8" y="7" width="1" height="1" fill="#a88018"/><rect x="9" y="7" width="1" height="1" fill="#f4e400"/><rect x="10" y="7" width="1" height="1" fill="#a88018"/><rect x="11" y="7" width="1" height="1" fill="#f4e400"/><rect x="12" y="7" width="3" height="1" fill="#000"/><rect x="16" y="7" width="3" height="1" fill="#108a10"/><rect x="2" y="8" width="3" height="1" fill="#000"/><rect x="5" y="8" width="1" height="1" fill="#a88018"/><rect x="6" y="8" width="1" height="1" fill="#f4e400"/><rect x="7" y="8" width="1" height="1" fill="#a88018"/><rect x="8" y="8" width="1" height="1" fill="#f4e400"/><rect x="9" y="8" width="1" height="1" fill="#a88018"/><rect x="10" y="8" width="1" height="1" fill="#f4e400"/><rect x="11" y="8" width="1" height="1" fill="#a88018"/><rect x="12" y="8" width="1" height="1" fill="#000"/><rect x="16" y="8" width="2" height="1" fill="#108a10"/><rect x="3" y="9" width="1" height="1" fill="#000"/><rect x="6" y="9" width="1" height="1" fill="#a88018"/><rect x="7" y="9" width="1" height="1" fill="#f4e400"/><rect x="8" y="9" width="1" height="1" fill="#a88018"/><rect x="9" y="9" width="1" height="1" fill="#f4e400"/><rect x="10" y="9" width="1" height="1" fill="#a88018"/><rect x="11" y="9" width="1" height="1" fill="#f4e400"/><rect x="12" y="9" width="1" height="1" fill="#000"/><rect x="3" y="10" width="4" height="1" fill="#000"/><rect x="7" y="10" width="1" height="1" fill="#a88018"/><rect x="8" y="10" width="1" height="1" fill="#f4e400"/><rect x="9" y="10" width="1" height="1" fill="#a88018"/><rect x="10" y="10" width="1" height="1" fill="#f4e400"/><rect x="11" y="10" width="1" height="1" fill="#000"/><rect x="3" y="11" width="1" height="1" fill="#000"/><rect x="5" y="11" width="1" height="1" fill="#000"/><rect x="6" y="11" width="1" height="1" fill="#f0f000"/><rect x="7" y="11" width="1" height="1" fill="#000"/><rect x="8" y="11" width="1" height="1" fill="#a88018"/><rect x="9" y="11" width="2" height="1" fill="#000"/><rect x="3" y="12" width="1" height="1" fill="#000"/><rect x="5" y="12" width="3" height="1" fill="#000"/><rect x="3" y="13" width="1" height="1" fill="#000"/><rect x="3" y="14" width="5" height="1" fill="#000"/><rect x="5" y="15" width="1" height="1" fill="#000"/><rect x="6" y="15" width="1" height="1" fill="#00d800"/><rect x="7" y="15" width="1" height="1" fill="#000"/><rect x="5" y="16" width="3" height="1" fill="#000"/></svg>
<svg class="a" style="left:311px;top:55px" width="20" height="20" viewBox="0 0 20 20"><path d="M9.5 2.5L17.5 17.5H1.5Z" fill="#f6e890"/><path d="M9.5 3L17.5 17.5" stroke="#c4c8e8" stroke-width="1"/><rect x="8.5" y="7" width="2" height="6" fill="#9098c0"/><rect x="8.5" y="14" width="2" height="2" fill="#9098c0"/></svg>
<svg class="a" style="left:348px;top:55px" width="20" height="20" viewBox="0 0 20 20" shape-rendering="crispEdges"><rect x="6" y="2" width="5" height="1" fill="#00a800"/><rect x="6" y="3" width="5" height="1" fill="#00a800"/><rect x="11" y="3" width="1" height="1" fill="#4a4a4a"/><rect x="6" y="4" width="5" height="1" fill="#00a800"/><rect x="11" y="4" width="1" height="1" fill="#4a4a4a"/><rect x="6" y="5" width="5" height="1" fill="#00a800"/><rect x="11" y="5" width="1" height="1" fill="#4a4a4a"/><rect x="2" y="6" width="13" height="1" fill="#00a800"/><rect x="2" y="7" width="13" height="1" fill="#00a800"/><rect x="15" y="7" width="1" height="1" fill="#4a4a4a"/><rect x="2" y="8" width="13" height="1" fill="#00a800"/><rect x="15" y="8" width="1" height="1" fill="#4a4a4a"/><rect x="2" y="9" width="13" height="1" fill="#00a800"/><rect x="15" y="9" width="1" height="1" fill="#4a4a4a"/><rect x="2" y="10" width="13" height="1" fill="#00a800"/><rect x="15" y="10" width="1" height="1" fill="#4a4a4a"/><rect x="3" y="11" width="3" height="1" fill="#4a4a4a"/><rect x="6" y="11" width="5" height="1" fill="#00a800"/><rect x="11" y="11" width="2" height="1" fill="#4a4a4a"/><rect x="13" y="11" width="1" height="1" fill="#0a7a0a"/><rect x="6" y="12" width="5" height="1" fill="#00a800"/><rect x="11" y="12" width="1" height="1" fill="#4a4a4a"/><rect x="13" y="12" width="2" height="1" fill="#0a7a0a"/><rect x="6" y="13" width="5" height="1" fill="#00a800"/><rect x="11" y="13" width="1" height="1" fill="#4a4a4a"/><rect x="13" y="13" width="1" height="1" fill="#0a7a0a"/><rect x="14" y="13" width="1" height="1" fill="#8cf08c"/><rect x="15" y="13" width="1" height="1" fill="#0a7a0a"/><rect x="7" y="14" width="4" height="1" fill="#4a4a4a"/><rect x="13" y="14" width="1" height="1" fill="#0a7a0a"/><rect x="14" y="14" width="2" height="1" fill="#8cf08c"/><rect x="16" y="14" width="1" height="1" fill="#0a7a0a"/><rect x="13" y="15" width="1" height="1" fill="#0a7a0a"/><rect x="14" y="15" width="3" height="1" fill="#8cf08c"/><rect x="17" y="15" width="1" height="1" fill="#0a7a0a"/><rect x="13" y="16" width="1" height="1" fill="#0a7a0a"/><rect x="14" y="16" width="2" height="1" fill="#8cf08c"/><rect x="16" y="16" width="1" height="1" fill="#0a7a0a"/><rect x="13" y="17" width="1" height="1" fill="#0a7a0a"/><rect x="14" y="17" width="1" height="1" fill="#8cf08c"/><rect x="15" y="17" width="1" height="1" fill="#0a7a0a"/><rect x="13" y="18" width="2" height="1" fill="#0a7a0a"/><rect x="13" y="19" width="1" height="1" fill="#0a7a0a"/></svg>
<svg class="a" style="left:371px;top:55px" width="20" height="18" viewBox="0 0 20 18" shape-rendering="crispEdges"><rect x="6" y="2" width="5" height="1" fill="#00a800"/><rect x="6" y="3" width="5" height="1" fill="#00a800"/><rect x="11" y="3" width="1" height="1" fill="#4a4a4a"/><rect x="6" y="4" width="5" height="1" fill="#00a800"/><rect x="11" y="4" width="1" height="1" fill="#4a4a4a"/><rect x="6" y="5" width="5" height="1" fill="#00a800"/><rect x="11" y="5" width="1" height="1" fill="#4a4a4a"/><rect x="2" y="6" width="13" height="1" fill="#00a800"/><rect x="2" y="7" width="13" height="1" fill="#00a800"/><rect x="15" y="7" width="1" height="1" fill="#4a4a4a"/><rect x="2" y="8" width="13" height="1" fill="#00a800"/><rect x="15" y="8" width="1" height="1" fill="#4a4a4a"/><rect x="2" y="9" width="13" height="1" fill="#00a800"/><rect x="15" y="9" width="1" height="1" fill="#4a4a4a"/><rect x="2" y="10" width="7" height="1" fill="#00a800"/><rect x="9" y="10" width="9" height="1" fill="#1c5ee0"/><rect x="3" y="11" width="3" height="1" fill="#4a4a4a"/><rect x="6" y="11" width="3" height="1" fill="#00a800"/><rect x="9" y="11" width="9" height="1" fill="#1c5ee0"/><rect x="6" y="12" width="3" height="1" fill="#00a800"/><rect x="9" y="12" width="1" height="1" fill="#1c5ee0"/><rect x="10" y="12" width="7" height="1" fill="#ffffff"/><rect x="17" y="12" width="1" height="1" fill="#1c5ee0"/><rect x="6" y="13" width="3" height="1" fill="#00a800"/><rect x="9" y="13" width="1" height="1" fill="#1c5ee0"/><rect x="10" y="13" width="7" height="1" fill="#ffffff"/><rect x="17" y="13" width="1" height="1" fill="#1c5ee0"/><rect x="7" y="14" width="2" height="1" fill="#4a4a4a"/><rect x="9" y="14" width="1" height="1" fill="#1c5ee0"/><rect x="10" y="14" width="7" height="1" fill="#ffffff"/><rect x="17" y="14" width="1" height="1" fill="#1c5ee0"/><rect x="9" y="15" width="1" height="1" fill="#1c5ee0"/><rect x="10" y="15" width="7" height="1" fill="#ffffff"/><rect x="17" y="15" width="1" height="1" fill="#1c5ee0"/><rect x="9" y="16" width="1" height="1" fill="#1c5ee0"/><rect x="10" y="16" width="7" height="1" fill="#d0d8f0"/><rect x="17" y="16" width="1" height="1" fill="#1c5ee0"/><rect x="9" y="17" width="9" height="1" fill="#1c5ee0"/></svg>
<svg class="a" style="left:404px;top:55px" width="20" height="17" viewBox="0 0 20 17" shape-rendering="crispEdges"><rect x="12" y="2" width="4" height="1" fill="#e6d2a4"/><rect x="6" y="3" width="4" height="1" fill="#c4c4c4"/><rect x="11" y="3" width="6" height="1" fill="#e6d2a4"/><rect x="11" y="4" width="1" height="1" fill="#e6d2a4"/><rect x="12" y="4" width="1" height="1" fill="#d4b880"/><rect x="13" y="4" width="4" height="1" fill="#e6d2a4"/><rect x="6" y="5" width="4" height="1" fill="#c4c4c4"/><rect x="11" y="5" width="6" height="1" fill="#e6d2a4"/><rect x="11" y="6" width="2" height="1" fill="#e6d2a4"/><rect x="13" y="6" width="1" height="1" fill="#d4b880"/><rect x="14" y="6" width="3" height="1" fill="#e6d2a4"/><rect x="12" y="7" width="4" height="1" fill="#e6d2a4"/><rect x="6" y="8" width="5" height="1" fill="#c4c4c4"/><rect x="10" y="9" width="3" height="1" fill="#e6d2a4"/><rect x="6" y="10" width="4" height="1" fill="#c4c4c4"/><rect x="10" y="10" width="5" height="1" fill="#e6d2a4"/><rect x="9" y="11" width="7" height="1" fill="#e6d2a4"/><rect x="6" y="12" width="2" height="1" fill="#c4c4c4"/><rect x="9" y="12" width="2" height="1" fill="#e6d2a4"/><rect x="11" y="12" width="1" height="1" fill="#d4b880"/><rect x="12" y="12" width="4" height="1" fill="#e6d2a4"/><rect x="9" y="13" width="3" height="1" fill="#e6d2a4"/><rect x="12" y="13" width="1" height="1" fill="#d4b880"/><rect x="13" y="13" width="2" height="1" fill="#e6d2a4"/><rect x="6" y="14" width="2" height="1" fill="#c4c4c4"/><rect x="9" y="14" width="7" height="1" fill="#e6d2a4"/><rect x="10" y="15" width="5" height="1" fill="#e6d2a4"/><rect x="11" y="16" width="3" height="1" fill="#e6d2a4"/></svg>
<div class="a" style="left:0px;top:78px;width:422px;height:490px;background:#f0f0f0"></div>
<div class="a" style="left:94px;top:78px;width:328px;height:1px;background:#fafafa"></div>
<div class="a" style="left:0px;top:78px;width:94px;height:1px;background:#8c8c8c"></div>
<div class="a" style="left:0px;top:79px;width:48px;height:25px;background:#fff"></div>
<div class="a" style="left:48px;top:80px;width:42px;height:24px;background:#f0f0f0;border:1px solid #d9d9d9;border-bottom:none"></div>
<div class="a" style="left:48px;top:103px;width:369px;height:1px;background:#d9d9d9"></div>
<div class="a" style="left:0px;top:104px;width:417px;height:464px;background:#fff"></div>
<div class="t" style="left:6px;top:83px;">Items</div>
<div class="t" style="left:58px;top:85px;">Files</div>
<div class="a" style="left:1px;top:108px;width:415px;height:470px;border:1px solid #000;border-right:1px solid #000;background:#fff"></div>
<div class="a" style="left:2px;top:109px;width:413px;height:1px;background:#a0a0a8"></div>
<div class="a" style="left:2px;top:109px;width:1px;height:459px;background:#a0a0a8"></div>
<div class="a" style="left:95px;top:230px;width:73px;height:17px;background:#0078d7"></div>
<div class="t" style="left:50px;top:112px;">Project: Jenkins.lvproj</div>
<div class="t" style="left:66px;top:129px;">My Computer</div>
<div class="t" style="left:82px;top:146px;">Unit Tests</div>
<div class="t" style="left:82px;top:163px;">Add.vi</div>
<div class="t" style="left:82px;top:180px;">Subtract.vi</div>
<div class="t" style="left:82px;top:197px;">Dependencies</div>
<div class="t" style="left:82px;top:214px;">Build Specifications</div>
<div class="t" style="left:98px;top:231px;color:#fff">myBuildSpec</div>
<div class="a" style="left:20px;top:119px;width:1px;height:1px;background:#000"></div><div class="a" style="left:22px;top:119px;width:1px;height:1px;background:#000"></div><div class="a" style="left:30px;top:127px;width:1px;height:1px;background:#000"></div><div class="a" style="left:30px;top:129px;width:1px;height:1px;background:#000"></div><div class="a" style="left:30px;top:131px;width:1px;height:1px;background:#000"></div><div class="a" style="left:36px;top:136px;width:1px;height:1px;background:#000"></div><div class="a" style="left:38px;top:136px;width:1px;height:1px;background:#000"></div><div class="a" style="left:46px;top:146px;width:1px;height:1px;background:#000"></div><div class="a" style="left:46px;top:148px;width:1px;height:1px;background:#000"></div><div class="a" style="left:46px;top:150px;width:1px;height:1px;background:#000"></div><div class="a" style="left:46px;top:152px;width:1px;height:1px;background:#000"></div><div class="a" style="left:46px;top:154px;width:1px;height:1px;background:#000"></div><div class="a" style="left:46px;top:156px;width:1px;height:1px;background:#000"></div><div class="a" style="left:46px;top:158px;width:1px;height:1px;background:#000"></div><div class="a" style="left:46px;top:160px;width:1px;height:1px;background:#000"></div><div class="a" style="left:46px;top:162px;width:1px;height:1px;background:#000"></div><div class="a" style="left:46px;top:164px;width:1px;height:1px;background:#000"></div><div class="a" style="left:46px;top:166px;width:1px;height:1px;background:#000"></div><div class="a" style="left:46px;top:168px;width:1px;height:1px;background:#000"></div><div class="a" style="left:46px;top:170px;width:1px;height:1px;background:#000"></div><div class="a" style="left:46px;top:172px;width:1px;height:1px;background:#000"></div><div class="a" style="left:46px;top:174px;width:1px;height:1px;background:#000"></div><div class="a" style="left:46px;top:176px;width:1px;height:1px;background:#000"></div><div class="a" style="left:46px;top:178px;width:1px;height:1px;background:#000"></div><div class="a" style="left:46px;top:180px;width:1px;height:1px;background:#000"></div><div class="a" style="left:46px;top:182px;width:1px;height:1px;background:#000"></div><div class="a" style="left:46px;top:184px;width:1px;height:1px;background:#000"></div><div class="a" style="left:46px;top:186px;width:1px;height:1px;background:#000"></div><div class="a" style="left:46px;top:188px;width:1px;height:1px;background:#000"></div><div class="a" style="left:46px;top:190px;width:1px;height:1px;background:#000"></div><div class="a" style="left:46px;top:192px;width:1px;height:1px;background:#000"></div><div class="a" style="left:46px;top:194px;width:1px;height:1px;background:#000"></div><div class="a" style="left:46px;top:196px;width:1px;height:1px;background:#000"></div><div class="a" style="left:46px;top:198px;width:1px;height:1px;background:#000"></div><div class="a" style="left:46px;top:200px;width:1px;height:1px;background:#000"></div><div class="a" style="left:46px;top:202px;width:1px;height:1px;background:#000"></div><div class="a" style="left:46px;top:204px;width:1px;height:1px;background:#000"></div><div class="a" style="left:46px;top:206px;width:1px;height:1px;background:#000"></div><div class="a" style="left:46px;top:208px;width:1px;height:1px;background:#000"></div><div class="a" style="left:46px;top:210px;width:1px;height:1px;background:#000"></div><div class="a" style="left:46px;top:212px;width:1px;height:1px;background:#000"></div><div class="a" style="left:46px;top:214px;width:1px;height:1px;background:#000"></div><div class="a" style="left:52px;top:153px;width:1px;height:1px;background:#000"></div><div class="a" style="left:54px;top:153px;width:1px;height:1px;background:#000"></div><div class="a" style="left:47px;top:170px;width:1px;height:1px;background:#000"></div><div class="a" style="left:49px;top:170px;width:1px;height:1px;background:#000"></div><div class="a" style="left:51px;top:170px;width:1px;height:1px;background:#000"></div><div class="a" style="left:53px;top:170px;width:1px;height:1px;background:#000"></div><div class="a" style="left:47px;top:187px;width:1px;height:1px;background:#000"></div><div class="a" style="left:49px;top:187px;width:1px;height:1px;background:#000"></div><div class="a" style="left:51px;top:187px;width:1px;height:1px;background:#000"></div><div class="a" style="left:53px;top:187px;width:1px;height:1px;background:#000"></div><div class="a" style="left:47px;top:204px;width:1px;height:1px;background:#000"></div><div class="a" style="left:49px;top:204px;width:1px;height:1px;background:#000"></div><div class="a" style="left:51px;top:204px;width:1px;height:1px;background:#000"></div><div class="a" style="left:53px;top:204px;width:1px;height:1px;background:#000"></div><div class="a" style="left:52px;top:221px;width:1px;height:1px;background:#000"></div><div class="a" style="left:54px;top:221px;width:1px;height:1px;background:#000"></div><div class="a" style="left:62px;top:230px;width:1px;height:1px;background:#000"></div><div class="a" style="left:62px;top:232px;width:1px;height:1px;background:#000"></div><div class="a" style="left:62px;top:234px;width:1px;height:1px;background:#000"></div><div class="a" style="left:62px;top:236px;width:1px;height:1px;background:#000"></div><div class="a" style="left:62px;top:238px;width:1px;height:1px;background:#000"></div><div class="a" style="left:62px;top:238px;width:1px;height:1px;background:#000"></div><div class="a" style="left:64px;top:238px;width:1px;height:1px;background:#000"></div><div class="a" style="left:66px;top:238px;width:1px;height:1px;background:#000"></div><div class="a" style="left:68px;top:238px;width:1px;height:1px;background:#000"></div><svg class="a" style="left:10px;top:115px" width="9" height="9" viewBox="0 0 9 9"><defs><linearGradient id="eg" x1="0" y1="0" x2="0" y2="1"><stop offset="0" stop-color="#fff"/><stop offset="1" stop-color="#d8d8d8"/></linearGradient></defs><rect x="0.5" y="0.5" width="8" height="8" rx="1.2" fill="url(#eg)" stroke="#9a9a9a"/><rect x="2" y="4" width="5" height="1" fill="#3a4ea0"/></svg>
<svg class="a" style="left:26px;top:132px" width="9" height="9" viewBox="0 0 9 9"><defs><linearGradient id="eg" x1="0" y1="0" x2="0" y2="1"><stop offset="0" stop-color="#fff"/><stop offset="1" stop-color="#d8d8d8"/></linearGradient></defs><rect x="0.5" y="0.5" width="8" height="8" rx="1.2" fill="url(#eg)" stroke="#9a9a9a"/><rect x="2" y="4" width="5" height="1" fill="#3a4ea0"/></svg>
<svg class="a" style="left:42px;top:149px" width="9" height="9" viewBox="0 0 9 9"><defs><linearGradient id="eg" x1="0" y1="0" x2="0" y2="1"><stop offset="0" stop-color="#fff"/><stop offset="1" stop-color="#d8d8d8"/></linearGradient></defs><rect x="0.5" y="0.5" width="8" height="8" rx="1.2" fill="url(#eg)" stroke="#9a9a9a"/><rect x="2" y="4" width="5" height="1" fill="#3a4ea0"/><rect x="4" y="2" width="1" height="5" fill="#3a4ea0"/></svg>
<svg class="a" style="left:42px;top:217px" width="9" height="9" viewBox="0 0 9 9"><defs><linearGradient id="eg" x1="0" y1="0" x2="0" y2="1"><stop offset="0" stop-color="#fff"/><stop offset="1" stop-color="#d8d8d8"/></linearGradient></defs><rect x="0.5" y="0.5" width="8" height="8" rx="1.2" fill="url(#eg)" stroke="#9a9a9a"/><rect x="2" y="4" width="5" height="1" fill="#3a4ea0"/></svg>
<svg class="a" style="left:24px;top:110px" width="18" height="16" viewBox="0 0 18 16" shape-rendering="crispEdges"><rect x="2" y="1" width="10" height="1" fill="#7b8fd4"/><rect x="2" y="2" width="1" height="1" fill="#7b8fd4"/><rect x="3" y="2" width="8" height="1" fill="#f2f6ff"/><rect x="11" y="2" width="2" height="1" fill="#7b8fd4"/><rect x="2" y="3" width="1" height="1" fill="#7b8fd4"/><rect x="3" y="3" width="1" height="1" fill="#f2f6ff"/><rect x="4" y="3" width="3" height="1" fill="#000"/><rect x="7" y="3" width="4" height="1" fill="#f2f6ff"/><rect x="11" y="3" width="1" height="1" fill="#7b8fd4"/><rect x="12" y="3" width="1" height="1" fill="#f2f6ff"/><rect x="13" y="3" width="1" height="1" fill="#7b8fd4"/><rect x="2" y="4" width="1" height="1" fill="#7b8fd4"/><rect x="3" y="4" width="1" height="1" fill="#f2f6ff"/><rect x="4" y="4" width="1" height="1" fill="#000"/><rect x="5" y="4" width="1" height="1" fill="#00e0f0"/><rect x="6" y="4" width="1" height="1" fill="#000"/><rect x="7" y="4" width="4" height="1" fill="#f2f6ff"/><rect x="11" y="4" width="4" height="1" fill="#7b8fd4"/><rect x="2" y="5" width="1" height="1" fill="#7b8fd4"/><rect x="3" y="5" width="1" height="1" fill="#f2f6ff"/><rect x="4" y="5" width="3" height="1" fill="#000"/><rect x="7" y="5" width="7" height="1" fill="#f2f6ff"/><rect x="14" y="5" width="1" height="1" fill="#7b8fd4"/><rect x="2" y="6" width="1" height="1" fill="#7b8fd4"/><rect x="3" y="6" width="2" height="1" fill="#f2f6ff"/><rect x="5" y="6" width="1" height="1" fill="#000"/><rect x="6" y="6" width="8" height="1" fill="#f2f6ff"/><rect x="14" y="6" width="1" height="1" fill="#7b8fd4"/><rect x="2" y="7" width="1" height="1" fill="#7b8fd4"/><rect x="3" y="7" width="2" height="1" fill="#f2f6ff"/><rect x="5" y="7" width="1" height="1" fill="#000"/><rect x="6" y="7" width="1" height="1" fill="#f2f6ff"/><rect x="7" y="7" width="3" height="1" fill="#000"/><rect x="10" y="7" width="4" height="1" fill="#f2f6ff"/><rect x="14" y="7" width="1" height="1" fill="#7b8fd4"/><rect x="2" y="8" width="1" height="1" fill="#7b8fd4"/><rect x="3" y="8" width="2" height="1" fill="#f2f6ff"/><rect x="5" y="8" width="3" height="1" fill="#000"/><rect x="8" y="8" width="1" height="1" fill="#f0f000"/><rect x="9" y="8" width="1" height="1" fill="#000"/><rect x="10" y="8" width="4" height="1" fill="#f2f6ff"/><rect x="14" y="8" width="1" height="1" fill="#7b8fd4"/><rect x="2" y="9" width="1" height="1" fill="#7b8fd4"/><rect x="3" y="9" width="2" height="1" fill="#f2f6ff"/><rect x="5" y="9" width="1" height="1" fill="#000"/><rect x="6" y="9" width="1" height="1" fill="#f2f6ff"/><rect x="7" y="9" width="3" height="1" fill="#000"/><rect x="10" y="9" width="1" height="1" fill="#c0a000"/><rect x="11" y="9" width="2" height="1" fill="#f4e400"/><rect x="13" y="9" width="1" height="1" fill="#f2f6ff"/><rect x="14" y="9" width="1" height="1" fill="#7b8fd4"/><rect x="2" y="10" width="1" height="1" fill="#7b8fd4"/><rect x="3" y="10" width="2" height="1" fill="#f2f6ff"/><rect x="5" y="10" width="1" height="1" fill="#000"/><rect x="6" y="10" width="3" height="1" fill="#f2f6ff"/><rect x="9" y="10" width="1" height="1" fill="#c0a000"/><rect x="10" y="10" width="4" height="1" fill="#f4e400"/><rect x="14" y="10" width="1" height="1" fill="#7b8fd4"/><rect x="2" y="11" width="1" height="1" fill="#7b8fd4"/><rect x="3" y="11" width="2" height="1" fill="#f2f6ff"/><rect x="5" y="11" width="1" height="1" fill="#000"/><rect x="6" y="11" width="1" height="1" fill="#f2f6ff"/><rect x="7" y="11" width="2" height="1" fill="#000"/><rect x="9" y="11" width="1" height="1" fill="#c0a000"/><rect x="10" y="11" width="2" height="1" fill="#f4e400"/><rect x="12" y="11" width="1" height="1" fill="#000"/><rect x="13" y="11" width="3" height="1" fill="#f4e400"/><rect x="2" y="12" width="1" height="1" fill="#7b8fd4"/><rect x="3" y="12" width="2" height="1" fill="#f2f6ff"/><rect x="5" y="12" width="3" height="1" fill="#000"/><rect x="8" y="12" width="1" height="1" fill="#00d800"/><rect x="9" y="12" width="1" height="1" fill="#c0a000"/><rect x="10" y="12" width="1" height="1" fill="#f4e400"/><rect x="11" y="12" width="3" height="1" fill="#000"/><rect x="14" y="12" width="1" height="1" fill="#f4e400"/><rect x="15" y="12" width="2" height="1" fill="#ff2020"/><rect x="2" y="13" width="1" height="1" fill="#7b8fd4"/><rect x="3" y="13" width="4" height="1" fill="#f2f6ff"/><rect x="7" y="13" width="2" height="1" fill="#000"/><rect x="9" y="13" width="1" height="1" fill="#c0a000"/><rect x="10" y="13" width="2" height="1" fill="#f4e400"/><rect x="12" y="13" width="1" height="1" fill="#000"/><rect x="13" y="13" width="3" height="1" fill="#f4e400"/><rect x="2" y="14" width="1" height="1" fill="#7b8fd4"/><rect x="3" y="14" width="6" height="1" fill="#f2f6ff"/><rect x="9" y="14" width="1" height="1" fill="#c0a000"/><rect x="10" y="14" width="4" height="1" fill="#f4e400"/><rect x="14" y="14" width="1" height="1" fill="#7b8fd4"/><rect x="2" y="15" width="8" height="1" fill="#7b8fd4"/><rect x="10" y="15" width="1" height="1" fill="#c0a000"/><rect x="11" y="15" width="2" height="1" fill="#f4e400"/><rect x="13" y="15" width="2" height="1" fill="#7b8fd4"/></svg>
<svg class="a" style="left:42px;top:128px" width="13" height="15" viewBox="0 0 13 15" shape-rendering="crispEdges"><rect x="3" y="1" width="10" height="1" fill="#b8887a"/><rect x="3" y="2" width="1" height="1" fill="#b8887a"/><rect x="4" y="2" width="4" height="1" fill="#18a8f0"/><rect x="8" y="2" width="3" height="1" fill="#78d0f8"/><rect x="11" y="2" width="1" height="1" fill="#18a8f0"/><rect x="12" y="2" width="1" height="1" fill="#b8887a"/><rect x="3" y="3" width="1" height="1" fill="#b8887a"/><rect x="4" y="3" width="3" height="1" fill="#18a8f0"/><rect x="7" y="3" width="3" height="1" fill="#78d0f8"/><rect x="10" y="3" width="2" height="1" fill="#18a8f0"/><rect x="12" y="3" width="1" height="1" fill="#b8887a"/><rect x="3" y="4" width="1" height="1" fill="#b8887a"/><rect x="4" y="4" width="2" height="1" fill="#18a8f0"/><rect x="6" y="4" width="3" height="1" fill="#78d0f8"/><rect x="9" y="4" width="3" height="1" fill="#18a8f0"/><rect x="12" y="4" width="1" height="1" fill="#b8887a"/><rect x="3" y="5" width="1" height="1" fill="#b8887a"/><rect x="4" y="5" width="1" height="1" fill="#18a8f0"/><rect x="5" y="5" width="3" height="1" fill="#78d0f8"/><rect x="8" y="5" width="4" height="1" fill="#18a8f0"/><rect x="12" y="5" width="1" height="1" fill="#b8887a"/><rect x="3" y="6" width="1" height="1" fill="#b8887a"/><rect x="4" y="6" width="8" height="1" fill="#18a8f0"/><rect x="12" y="6" width="1" height="1" fill="#b8887a"/><rect x="3" y="7" width="1" height="1" fill="#b8887a"/><rect x="4" y="7" width="8" height="1" fill="#18a8f0"/><rect x="12" y="7" width="1" height="1" fill="#b8887a"/><rect x="3" y="8" width="1" height="1" fill="#b8887a"/><rect x="4" y="8" width="8" height="1" fill="#18a8f0"/><rect x="12" y="8" width="1" height="1" fill="#b8887a"/><rect x="3" y="9" width="10" height="1" fill="#b8887a"/><rect x="4" y="10" width="8" height="1" fill="#b8887a"/><rect x="2" y="11" width="2" height="1" fill="#d4b4a8"/><rect x="4" y="11" width="2" height="1" fill="#ffffff"/><rect x="6" y="11" width="1" height="1" fill="#d8d0d0"/><rect x="7" y="11" width="2" height="1" fill="#d4b4a8"/><rect x="9" y="11" width="2" height="1" fill="#000"/><rect x="11" y="11" width="2" height="1" fill="#d4b4a8"/><rect x="2" y="12" width="2" height="1" fill="#d4b4a8"/><rect x="4" y="12" width="1" height="1" fill="#d8d0d0"/><rect x="5" y="12" width="2" height="1" fill="#ffffff"/><rect x="7" y="12" width="1" height="1" fill="#d4b4a8"/><rect x="8" y="12" width="3" height="1" fill="#000"/><rect x="11" y="12" width="2" height="1" fill="#d4b4a8"/><rect x="2" y="13" width="11" height="1" fill="#d4b4a8"/><rect x="4" y="14" width="7" height="1" fill="#d8d0d0"/></svg>
<svg class="a" style="left:56px;top:145px" width="16" height="15" viewBox="0 0 16 15" shape-rendering="crispEdges"><rect x="8" y="1" width="6" height="1" fill="#000088"/><rect x="2" y="2" width="7" height="1" fill="#000088"/><rect x="9" y="2" width="5" height="1" fill="#9cbcf0"/><rect x="14" y="2" width="1" height="1" fill="#000088"/><rect x="2" y="3" width="1" height="1" fill="#000088"/><rect x="3" y="3" width="11" height="1" fill="#9cbcf0"/><rect x="14" y="3" width="1" height="1" fill="#000088"/><rect x="2" y="4" width="1" height="1" fill="#000088"/><rect x="3" y="4" width="4" height="1" fill="#9cbcf0"/><rect x="7" y="4" width="4" height="1" fill="#a08000"/><rect x="11" y="4" width="3" height="1" fill="#9cbcf0"/><rect x="14" y="4" width="1" height="1" fill="#000088"/><rect x="2" y="5" width="1" height="1" fill="#000088"/><rect x="3" y="5" width="3" height="1" fill="#9cbcf0"/><rect x="6" y="5" width="1" height="1" fill="#a08000"/><rect x="7" y="5" width="4" height="1" fill="#f4e400"/><rect x="11" y="5" width="1" height="1" fill="#a08000"/><rect x="12" y="5" width="2" height="1" fill="#9cbcf0"/><rect x="14" y="5" width="1" height="1" fill="#000088"/><rect x="2" y="6" width="1" height="1" fill="#000088"/><rect x="3" y="6" width="3" height="1" fill="#9cbcf0"/><rect x="6" y="6" width="6" height="1" fill="#a08000"/><rect x="12" y="6" width="2" height="1" fill="#9cbcf0"/><rect x="14" y="6" width="1" height="1" fill="#000088"/><rect x="2" y="7" width="1" height="1" fill="#000088"/><rect x="3" y="7" width="3" height="1" fill="#9cbcf0"/><rect x="6" y="7" width="1" height="1" fill="#a08000"/><rect x="7" y="7" width="4" height="1" fill="#f4e400"/><rect x="11" y="7" width="1" height="1" fill="#a08000"/><rect x="12" y="7" width="2" height="1" fill="#9cbcf0"/><rect x="14" y="7" width="1" height="1" fill="#000088"/><rect x="2" y="8" width="1" height="1" fill="#000088"/><rect x="3" y="8" width="3" height="1" fill="#9cbcf0"/><rect x="6" y="8" width="1" height="1" fill="#a08000"/><rect x="7" y="8" width="4" height="1" fill="#f4e400"/><rect x="11" y="8" width="1" height="1" fill="#a08000"/><rect x="12" y="8" width="2" height="1" fill="#9cbcf0"/><rect x="14" y="8" width="1" height="1" fill="#000088"/><rect x="2" y="9" width="1" height="1" fill="#000088"/><rect x="3" y="9" width="3" height="1" fill="#9cbcf0"/><rect x="6" y="9" width="1" height="1" fill="#a08000"/><rect x="7" y="9" width="4" height="1" fill="#f4e400"/><rect x="11" y="9" width="1" height="1" fill="#a08000"/><rect x="12" y="9" width="2" height="1" fill="#9cbcf0"/><rect x="14" y="9" width="1" height="1" fill="#000088"/><rect x="2" y="10" width="1" height="1" fill="#000088"/><rect x="3" y="10" width="3" height="1" fill="#9cbcf0"/><rect x="6" y="10" width="1" height="1" fill="#a08000"/><rect x="7" y="10" width="4" height="1" fill="#f4e400"/><rect x="11" y="10" width="1" height="1" fill="#a08000"/><rect x="12" y="10" width="2" height="1" fill="#9cbcf0"/><rect x="14" y="10" width="1" height="1" fill="#000088"/><rect x="2" y="11" width="1" height="1" fill="#000088"/><rect x="3" y="11" width="4" height="1" fill="#9cbcf0"/><rect x="7" y="11" width="4" height="1" fill="#a08000"/><rect x="11" y="11" width="2" height="1" fill="#9cbcf0"/><rect x="13" y="11" width="2" height="1" fill="#000088"/><rect x="2" y="12" width="1" height="1" fill="#000088"/><rect x="3" y="12" width="8" height="1" fill="#9cbcf0"/><rect x="11" y="12" width="3" height="1" fill="#000088"/><rect x="2" y="13" width="1" height="1" fill="#000088"/><rect x="3" y="13" width="5" height="1" fill="#9cbcf0"/><rect x="8" y="13" width="4" height="1" fill="#000088"/><rect x="2" y="14" width="7" height="1" fill="#000088"/></svg>
<svg class="a" style="left:56px;top:161px" width="17" height="16" viewBox="0 0 17 16" shape-rendering="crispEdges"><rect x="2" y="1" width="11" height="1" fill="#7b8fd4"/><rect x="2" y="2" width="1" height="1" fill="#7b8fd4"/><rect x="3" y="2" width="9" height="1" fill="#f2f6ff"/><rect x="12" y="2" width="2" height="1" fill="#7b8fd4"/><rect x="2" y="3" width="1" height="1" fill="#7b8fd4"/><rect x="3" y="3" width="9" height="1" fill="#f2f6ff"/><rect x="12" y="3" width="1" height="1" fill="#7b8fd4"/><rect x="13" y="3" width="1" height="1" fill="#f2f6ff"/><rect x="14" y="3" width="1" height="1" fill="#7b8fd4"/><rect x="2" y="4" width="1" height="1" fill="#7b8fd4"/><rect x="3" y="4" width="9" height="1" fill="#c8c8c8"/><rect x="12" y="4" width="3" height="1" fill="#7b8fd4"/><rect x="2" y="5" width="1" height="1" fill="#7b8fd4"/><rect x="3" y="5" width="11" height="1" fill="#c8c8c8"/><rect x="14" y="5" width="1" height="1" fill="#7b8fd4"/><rect x="2" y="6" width="1" height="1" fill="#7b8fd4"/><rect x="3" y="6" width="11" height="1" fill="#c8c8c8"/><rect x="14" y="6" width="1" height="1" fill="#7b8fd4"/><rect x="2" y="7" width="1" height="1" fill="#7b8fd4"/><rect x="3" y="7" width="1" height="1" fill="#c8c8c8"/><rect x="4" y="7" width="1" height="1" fill="#000"/><rect x="5" y="7" width="1" height="1" fill="#00b000"/><rect x="6" y="7" width="1" height="1" fill="#000"/><rect x="7" y="7" width="1" height="1" fill="#00b000"/><rect x="8" y="7" width="1" height="1" fill="#000"/><rect x="9" y="7" width="1" height="1" fill="#00b000"/><rect x="10" y="7" width="4" height="1" fill="#c8c8c8"/><rect x="14" y="7" width="1" height="1" fill="#7b8fd4"/><rect x="2" y="8" width="1" height="1" fill="#7b8fd4"/><rect x="3" y="8" width="1" height="1" fill="#c8c8c8"/><rect x="4" y="8" width="1" height="1" fill="#00b000"/><rect x="5" y="8" width="1" height="1" fill="#000"/><rect x="6" y="8" width="1" height="1" fill="#00b000"/><rect x="7" y="8" width="1" height="1" fill="#000"/><rect x="8" y="8" width="1" height="1" fill="#00b000"/><rect x="9" y="8" width="1" height="1" fill="#000"/><rect x="10" y="8" width="4" height="1" fill="#c8c8c8"/><rect x="14" y="8" width="1" height="1" fill="#7b8fd4"/><rect x="2" y="9" width="1" height="1" fill="#7b8fd4"/><rect x="3" y="9" width="1" height="1" fill="#c8c8c8"/><rect x="4" y="9" width="1" height="1" fill="#000"/><rect x="5" y="9" width="1" height="1" fill="#00b000"/><rect x="6" y="9" width="1" height="1" fill="#000"/><rect x="7" y="9" width="1" height="1" fill="#00b000"/><rect x="8" y="9" width="1" height="1" fill="#000"/><rect x="9" y="9" width="1" height="1" fill="#00b000"/><rect x="10" y="9" width="1" height="1" fill="#c8c8c8"/><rect x="11" y="9" width="1" height="1" fill="#c0a000"/><rect x="12" y="9" width="1" height="1" fill="#f4e400"/><rect x="13" y="9" width="1" height="1" fill="#c8c8c8"/><rect x="14" y="9" width="1" height="1" fill="#7b8fd4"/><rect x="2" y="10" width="1" height="1" fill="#7b8fd4"/><rect x="3" y="10" width="1" height="1" fill="#c8c8c8"/><rect x="4" y="10" width="1" height="1" fill="#00b000"/><rect x="5" y="10" width="1" height="1" fill="#000"/><rect x="6" y="10" width="1" height="1" fill="#00b000"/><rect x="7" y="10" width="1" height="1" fill="#000"/><rect x="8" y="10" width="1" height="1" fill="#00b000"/><rect x="9" y="10" width="1" height="1" fill="#000"/><rect x="10" y="10" width="1" height="1" fill="#c0a000"/><rect x="11" y="10" width="3" height="1" fill="#f4e400"/><rect x="14" y="10" width="1" height="1" fill="#7b8fd4"/><rect x="2" y="11" width="1" height="1" fill="#7b8fd4"/><rect x="3" y="11" width="5" height="1" fill="#c8c8c8"/><rect x="8" y="11" width="2" height="1" fill="#ff2020"/><rect x="10" y="11" width="1" height="1" fill="#c0a000"/><rect x="11" y="11" width="1" height="1" fill="#f4e400"/><rect x="12" y="11" width="1" height="1" fill="#000"/><rect x="13" y="11" width="2" height="1" fill="#f4e400"/><rect x="15" y="11" width="2" height="1" fill="#ff2020"/><rect x="2" y="12" width="1" height="1" fill="#7b8fd4"/><rect x="3" y="12" width="6" height="1" fill="#c8c8c8"/><rect x="9" y="12" width="1" height="1" fill="#c0a000"/><rect x="10" y="12" width="1" height="1" fill="#f4e400"/><rect x="11" y="12" width="3" height="1" fill="#000"/><rect x="14" y="12" width="1" height="1" fill="#f4e400"/><rect x="15" y="12" width="1" height="1" fill="#ff2020"/><rect x="2" y="13" width="1" height="1" fill="#7b8fd4"/><rect x="3" y="13" width="5" height="1" fill="#c8c8c8"/><rect x="8" y="13" width="2" height="1" fill="#2040f0"/><rect x="10" y="13" width="1" height="1" fill="#c0a000"/><rect x="11" y="13" width="1" height="1" fill="#f4e400"/><rect x="12" y="13" width="1" height="1" fill="#000"/><rect x="13" y="13" width="2" height="1" fill="#f4e400"/><rect x="2" y="14" width="1" height="1" fill="#7b8fd4"/><rect x="3" y="14" width="7" height="1" fill="#f2f6ff"/><rect x="10" y="14" width="1" height="1" fill="#c0a000"/><rect x="11" y="14" width="3" height="1" fill="#f4e400"/><rect x="14" y="14" width="1" height="1" fill="#7b8fd4"/><rect x="2" y="15" width="9" height="1" fill="#7b8fd4"/><rect x="11" y="15" width="1" height="1" fill="#c0a000"/><rect x="12" y="15" width="1" height="1" fill="#f4e400"/><rect x="13" y="15" width="2" height="1" fill="#7b8fd4"/></svg>
<svg class="a" style="left:56px;top:178px" width="17" height="16" viewBox="0 0 17 16" shape-rendering="crispEdges"><rect x="2" y="1" width="11" height="1" fill="#7b8fd4"/><rect x="2" y="2" width="1" height="1" fill="#7b8fd4"/><rect x="3" y="2" width="9" height="1" fill="#f2f6ff"/><rect x="12" y="2" width="2" height="1" fill="#7b8fd4"/><rect x="2" y="3" width="1" height="1" fill="#7b8fd4"/><rect x="3" y="3" width="9" height="1" fill="#f2f6ff"/><rect x="12" y="3" width="1" height="1" fill="#7b8fd4"/><rect x="13" y="3" width="1" height="1" fill="#f2f6ff"/><rect x="14" y="3" width="1" height="1" fill="#7b8fd4"/><rect x="2" y="4" width="1" height="1" fill="#7b8fd4"/><rect x="3" y="4" width="9" height="1" fill="#c8c8c8"/><rect x="12" y="4" width="3" height="1" fill="#7b8fd4"/><rect x="2" y="5" width="1" height="1" fill="#7b8fd4"/><rect x="3" y="5" width="11" height="1" fill="#c8c8c8"/><rect x="14" y="5" width="1" height="1" fill="#7b8fd4"/><rect x="2" y="6" width="1" height="1" fill="#7b8fd4"/><rect x="3" y="6" width="11" height="1" fill="#c8c8c8"/><rect x="14" y="6" width="1" height="1" fill="#7b8fd4"/><rect x="2" y="7" width="1" height="1" fill="#7b8fd4"/><rect x="3" y="7" width="1" height="1" fill="#c8c8c8"/><rect x="4" y="7" width="1" height="1" fill="#000"/><rect x="5" y="7" width="1" height="1" fill="#00b000"/><rect x="6" y="7" width="1" height="1" fill="#000"/><rect x="7" y="7" width="1" height="1" fill="#00b000"/><rect x="8" y="7" width="1" height="1" fill="#000"/><rect x="9" y="7" width="1" height="1" fill="#00b000"/><rect x="10" y="7" width="4" height="1" fill="#c8c8c8"/><rect x="14" y="7" width="1" height="1" fill="#7b8fd4"/><rect x="2" y="8" width="1" height="1" fill="#7b8fd4"/><rect x="3" y="8" width="1" height="1" fill="#c8c8c8"/><rect x="4" y="8" width="1" height="1" fill="#00b000"/><rect x="5" y="8" width="1" height="1" fill="#000"/><rect x="6" y="8" width="1" height="1" fill="#00b000"/><rect x="7" y="8" width="1" height="1" fill="#000"/><rect x="8" y="8" width="1" height="1" fill="#00b000"/><rect x="9" y="8" width="1" height="1" fill="#000"/><rect x="10" y="8" width="4" height="1" fill="#c8c8c8"/><rect x="14" y="8" width="1" height="1" fill="#7b8fd4"/><rect x="2" y="9" width="1" height="1" fill="#7b8fd4"/><rect x="3" y="9" width="1" height="1" fill="#c8c8c8"/><rect x="4" y="9" width="1" height="1" fill="#000"/><rect x="5" y="9" width="1" height="1" fill="#00b000"/><rect x="6" y="9" width="1" height="1" fill="#000"/><rect x="7" y="9" width="1" height="1" fill="#00b000"/><rect x="8" y="9" width="1" height="1" fill="#000"/><rect x="9" y="9" width="1" height="1" fill="#00b000"/><rect x="10" y="9" width="1" height="1" fill="#c8c8c8"/><rect x="11" y="9" width="1" height="1" fill="#c0a000"/><rect x="12" y="9" width="1" height="1" fill="#f4e400"/><rect x="13" y="9" width="1" height="1" fill="#c8c8c8"/><rect x="14" y="9" width="1" height="1" fill="#7b8fd4"/><rect x="2" y="10" width="1" height="1" fill="#7b8fd4"/><rect x="3" y="10" width="1" height="1" fill="#c8c8c8"/><rect x="4" y="10" width="1" height="1" fill="#00b000"/><rect x="5" y="10" width="1" height="1" fill="#000"/><rect x="6" y="10" width="1" height="1" fill="#00b000"/><rect x="7" y="10" width="1" height="1" fill="#000"/><rect x="8" y="10" width="1" height="1" fill="#00b000"/><rect x="9" y="10" width="1" height="1" fill="#000"/><rect x="10" y="10" width="1" height="1" fill="#c0a000"/><rect x="11" y="10" width="3" height="1" fill="#f4e400"/><rect x="14" y="10" width="1" height="1" fill="#7b8fd4"/><rect x="2" y="11" width="1" height="1" fill="#7b8fd4"/><rect x="3" y="11" width="5" height="1" fill="#c8c8c8"/><rect x="8" y="11" width="2" height="1" fill="#ff2020"/><rect x="10" y="11" width="1" height="1" fill="#c0a000"/><rect x="11" y="11" width="1" height="1" fill="#f4e400"/><rect x="12" y="11" width="1" height="1" fill="#000"/><rect x="13" y="11" width="2" height="1" fill="#f4e400"/><rect x="15" y="11" width="2" height="1" fill="#ff2020"/><rect x="2" y="12" width="1" height="1" fill="#7b8fd4"/><rect x="3" y="12" width="6" height="1" fill="#c8c8c8"/><rect x="9" y="12" width="1" height="1" fill="#c0a000"/><rect x="10" y="12" width="1" height="1" fill="#f4e400"/><rect x="11" y="12" width="3" height="1" fill="#000"/><rect x="14" y="12" width="1" height="1" fill="#f4e400"/><rect x="15" y="12" width="1" height="1" fill="#ff2020"/><rect x="2" y="13" width="1" height="1" fill="#7b8fd4"/><rect x="3" y="13" width="5" height="1" fill="#c8c8c8"/><rect x="8" y="13" width="2" height="1" fill="#2040f0"/><rect x="10" y="13" width="1" height="1" fill="#c0a000"/><rect x="11" y="13" width="1" height="1" fill="#f4e400"/><rect x="12" y="13" width="1" height="1" fill="#000"/><rect x="13" y="13" width="2" height="1" fill="#f4e400"/><rect x="2" y="14" width="1" height="1" fill="#7b8fd4"/><rect x="3" y="14" width="7" height="1" fill="#f2f6ff"/><rect x="10" y="14" width="1" height="1" fill="#c0a000"/><rect x="11" y="14" width="3" height="1" fill="#f4e400"/><rect x="14" y="14" width="1" height="1" fill="#7b8fd4"/><rect x="2" y="15" width="9" height="1" fill="#7b8fd4"/><rect x="11" y="15" width="1" height="1" fill="#c0a000"/><rect x="12" y="15" width="1" height="1" fill="#f4e400"/><rect x="13" y="15" width="2" height="1" fill="#7b8fd4"/></svg>
<svg class="a" style="left:56px;top:195px" width="18" height="16" viewBox="0 0 18 16" shape-rendering="crispEdges"><rect x="2" y="1" width="7" height="1" fill="#787878"/><rect x="11" y="1" width="7" height="1" fill="#787878"/><rect x="2" y="2" width="1" height="1" fill="#787878"/><rect x="3" y="2" width="5" height="1" fill="#e8ffe8"/><rect x="8" y="2" width="1" height="1" fill="#787878"/><rect x="11" y="2" width="1" height="1" fill="#787878"/><rect x="12" y="2" width="5" height="1" fill="#e8ffe8"/><rect x="17" y="2" width="1" height="1" fill="#787878"/><rect x="2" y="3" width="1" height="1" fill="#787878"/><rect x="3" y="3" width="5" height="1" fill="#90f090"/><rect x="8" y="3" width="1" height="1" fill="#787878"/><rect x="11" y="3" width="1" height="1" fill="#787878"/><rect x="12" y="3" width="5" height="1" fill="#90f090"/><rect x="17" y="3" width="1" height="1" fill="#787878"/><rect x="2" y="4" width="1" height="1" fill="#787878"/><rect x="3" y="4" width="5" height="1" fill="#90f090"/><rect x="8" y="4" width="1" height="1" fill="#787878"/><rect x="11" y="4" width="1" height="1" fill="#787878"/><rect x="12" y="4" width="5" height="1" fill="#90f090"/><rect x="17" y="4" width="1" height="1" fill="#787878"/><rect x="2" y="5" width="7" height="1" fill="#787878"/><rect x="11" y="5" width="7" height="1" fill="#787878"/><rect x="5" y="6" width="1" height="1" fill="#4a4a4a"/><rect x="14" y="6" width="1" height="1" fill="#4a4a4a"/><rect x="5" y="7" width="1" height="1" fill="#4a4a4a"/><rect x="14" y="7" width="1" height="1" fill="#4a4a4a"/><rect x="5" y="8" width="10" height="1" fill="#4a4a4a"/><rect x="9" y="9" width="1" height="1" fill="#4a4a4a"/><rect x="9" y="10" width="1" height="1" fill="#4a4a4a"/><rect x="7" y="11" width="7" height="1" fill="#787878"/><rect x="7" y="12" width="1" height="1" fill="#787878"/><rect x="8" y="12" width="5" height="1" fill="#e8ffe8"/><rect x="13" y="12" width="1" height="1" fill="#787878"/><rect x="7" y="13" width="1" height="1" fill="#787878"/><rect x="8" y="13" width="5" height="1" fill="#70f0f0"/><rect x="13" y="13" width="1" height="1" fill="#787878"/><rect x="7" y="14" width="1" height="1" fill="#787878"/><rect x="8" y="14" width="5" height="1" fill="#70f0f0"/><rect x="13" y="14" width="1" height="1" fill="#787878"/><rect x="7" y="15" width="7" height="1" fill="#787878"/></svg>
<svg class="a" style="left:56px;top:211px" width="18" height="17" viewBox="0 0 18 17" shape-rendering="crispEdges"><rect x="3" y="2" width="1" height="1" fill="#0010f0"/><rect x="11" y="2" width="1" height="1" fill="#0010f0"/><rect x="2" y="3" width="3" height="1" fill="#0010f0"/><rect x="7" y="3" width="1" height="1" fill="#0010f0"/><rect x="10" y="3" width="3" height="1" fill="#0010f0"/><rect x="3" y="4" width="1" height="1" fill="#0010f0"/><rect x="6" y="4" width="3" height="1" fill="#0010f0"/><rect x="11" y="4" width="1" height="1" fill="#0010f0"/><rect x="7" y="5" width="1" height="1" fill="#0010f0"/><rect x="8" y="6" width="1" height="1" fill="#9a6a10"/><rect x="6" y="7" width="2" height="1" fill="#fce890"/><rect x="8" y="7" width="3" height="1" fill="#9a6a10"/><rect x="4" y="8" width="3" height="1" fill="#fce890"/><rect x="7" y="8" width="6" height="1" fill="#9a6a10"/><rect x="2" y="9" width="4" height="1" fill="#fce890"/><rect x="6" y="9" width="6" height="1" fill="#9a6a10"/><rect x="12" y="9" width="4" height="1" fill="#d4a020"/><rect x="4" y="10" width="2" height="1" fill="#d4a020"/><rect x="6" y="10" width="3" height="1" fill="#9a6a10"/><rect x="9" y="10" width="1" height="1" fill="#0010f0"/><rect x="10" y="10" width="6" height="1" fill="#9a6a10"/><rect x="16" y="10" width="1" height="1" fill="#d4a020"/><rect x="4" y="11" width="3" height="1" fill="#d4a020"/><rect x="7" y="11" width="1" height="1" fill="#9a6a10"/><rect x="8" y="11" width="3" height="1" fill="#0010f0"/><rect x="11" y="11" width="2" height="1" fill="#9a6a10"/><rect x="13" y="11" width="3" height="1" fill="#fce890"/><rect x="16" y="11" width="1" height="1" fill="#d4a020"/><rect x="4" y="12" width="5" height="1" fill="#d4a020"/><rect x="9" y="12" width="1" height="1" fill="#0010f0"/><rect x="10" y="12" width="2" height="1" fill="#9a6a10"/><rect x="12" y="12" width="3" height="1" fill="#fce890"/><rect x="15" y="12" width="1" height="1" fill="#9a6a10"/><rect x="16" y="12" width="1" height="1" fill="#d4a020"/><rect x="4" y="13" width="7" height="1" fill="#d4a020"/><rect x="11" y="13" width="3" height="1" fill="#fce890"/><rect x="14" y="13" width="2" height="1" fill="#9a6a10"/><rect x="16" y="13" width="1" height="1" fill="#d4a020"/><rect x="4" y="14" width="8" height="1" fill="#d4a020"/><rect x="12" y="14" width="4" height="1" fill="#9a6a10"/><rect x="16" y="14" width="1" height="1" fill="#d4a020"/><rect x="4" y="15" width="13" height="1" fill="#d4a020"/><rect x="4" y="16" width="13" height="1" fill="#d4a020"/></svg>
<svg class="a" style="left:72px;top:229px" width="18" height="17" viewBox="0 0 18 17" shape-rendering="crispEdges"><rect x="3" y="1" width="2" height="1" fill="#0010c0"/><rect x="2" y="2" width="4" height="1" fill="#0010c0"/><rect x="3" y="3" width="2" height="1" fill="#0010c0"/><rect x="4" y="4" width="13" height="1" fill="#909090"/><rect x="17" y="4" width="1" height="1" fill="#000"/><rect x="4" y="5" width="1" height="1" fill="#909090"/><rect x="5" y="5" width="11" height="1" fill="#ffffff"/><rect x="16" y="5" width="1" height="1" fill="#909090"/><rect x="17" y="5" width="1" height="1" fill="#000"/><rect x="4" y="6" width="1" height="1" fill="#909090"/><rect x="5" y="6" width="1" height="1" fill="#ffffff"/><rect x="6" y="6" width="8" height="1" fill="#0010c0"/><rect x="14" y="6" width="2" height="1" fill="#ffffff"/><rect x="16" y="6" width="1" height="1" fill="#909090"/><rect x="17" y="6" width="1" height="1" fill="#000"/><rect x="4" y="7" width="1" height="1" fill="#909090"/><rect x="5" y="7" width="1" height="1" fill="#ffffff"/><rect x="6" y="7" width="6" height="1" fill="#0010c0"/><rect x="12" y="7" width="1" height="1" fill="#ffffff"/><rect x="13" y="7" width="1" height="1" fill="#0010c0"/><rect x="14" y="7" width="1" height="1" fill="#ffffff"/><rect x="15" y="7" width="1" height="1" fill="#0010c0"/><rect x="16" y="7" width="1" height="1" fill="#909090"/><rect x="17" y="7" width="1" height="1" fill="#000"/><rect x="4" y="8" width="1" height="1" fill="#909090"/><rect x="5" y="8" width="1" height="1" fill="#ffffff"/><rect x="6" y="8" width="10" height="1" fill="#0010c0"/><rect x="16" y="8" width="1" height="1" fill="#909090"/><rect x="17" y="8" width="1" height="1" fill="#000"/><rect x="4" y="9" width="1" height="1" fill="#909090"/><rect x="5" y="9" width="11" height="1" fill="#ffffff"/><rect x="16" y="9" width="1" height="1" fill="#909090"/><rect x="17" y="9" width="1" height="1" fill="#000"/><rect x="4" y="10" width="1" height="1" fill="#909090"/><rect x="5" y="10" width="11" height="1" fill="#ffffff"/><rect x="16" y="10" width="1" height="1" fill="#909090"/><rect x="17" y="10" width="1" height="1" fill="#000"/><rect x="4" y="11" width="1" height="1" fill="#909090"/><rect x="5" y="11" width="11" height="1" fill="#ffffff"/><rect x="16" y="11" width="1" height="1" fill="#909090"/><rect x="17" y="11" width="1" height="1" fill="#000"/><rect x="4" y="12" width="1" height="1" fill="#909090"/><rect x="5" y="12" width="11" height="1" fill="#ffffff"/><rect x="16" y="12" width="1" height="1" fill="#909090"/><rect x="17" y="12" width="1" height="1" fill="#000"/><rect x="4" y="13" width="1" height="1" fill="#909090"/><rect x="5" y="13" width="11" height="1" fill="#ffffff"/><rect x="16" y="13" width="1" height="1" fill="#909090"/><rect x="17" y="13" width="1" height="1" fill="#000"/><rect x="4" y="14" width="1" height="1" fill="#909090"/><rect x="5" y="14" width="11" height="1" fill="#ffffff"/><rect x="16" y="14" width="1" height="1" fill="#909090"/><rect x="17" y="14" width="1" height="1" fill="#000"/><rect x="4" y="15" width="13" height="1" fill="#909090"/><rect x="17" y="15" width="1" height="1" fill="#000"/><rect x="4" y="16" width="14" height="1" fill="#000"/></svg>
<div class="a" style="left:406px;top:0px;width:16px;height:568px;background:linear-gradient(to right,rgba(0,0,0,0),rgba(0,0,0,0.14))"></div>
<div class="a" style="left:421px;top:0px;width:1px;height:568px;background:rgba(60,40,30,0.45)"></div>
<div class="a" style="left:422px;top:0px;width:1px;height:568px;background:#2b88d8"></div>
<div class="a" style="left:423px;top:0px;width:846px;height:29px;background:#fff"></div>
<div class="a" style="left:423px;top:29px;width:846px;height:539px;background:#f0f0f0"></div>
<svg class="a" style="left:431px;top:5px" width="16" height="16" viewBox="0 0 16 16"><rect x="0" y="0" width="16" height="16" fill="#5a5d61"/><path d="M2 2 L13.5 7.75 L2 13.5 Z" fill="#ffcc00"/><path d="M4 7.5h3M5.5 6v3" stroke="#6a6a6a" stroke-width="1"/></svg>
<div class="t" style="left:452px;top:7px;letter-spacing:-0.16px">myBuildSpec Properties</div>
<svg class="a" style="left:1253px;top:8px" width="10" height="10" viewBox="0 0 10 10"><path d="M0 0L10 10M10 0L0 10" stroke="#000" stroke-width="1"/></svg>
<div class="a" style="left:434px;top:40px;width:195px;height:490px;border:1px solid #828790;background:#fff"></div>
<div class="a" style="left:436px;top:42px;width:191px;height:15px;background:#f0f0f0"></div>
<div class="a" style="left:436px;top:57px;width:191px;height:1px;background:#555"></div>
<div class="t" style="left:441px;top:43px;">Category</div>
<div class="a" style="left:438px;top:58px;width:67px;height:16px;background:#0078d7"></div>
<div class="t" style="left:441px;top:59px;color:#fff">Information</div>
<div class="t" style="left:441px;top:75px;">Source Files</div>
<div class="t" style="left:441px;top:91px;">Destinations</div>
<div class="t" style="left:441px;top:107px;">Source File Settings</div>
<div class="t" style="left:441px;top:123px;">Icon</div>
<div class="t" style="left:441px;top:139px;">Advanced</div>
<div class="t" style="left:441px;top:155px;">Additional Exclusions</div>
<div class="t" style="left:441px;top:171px;">Version Information</div>
<div class="t" style="left:441px;top:187px;">Windows Security</div>
<div class="t" style="left:441px;top:203px;">Shared Variable Deployment</div>
<div class="t" style="left:441px;top:219px;">Run-Time Languages</div>
<div class="t" style="left:441px;top:235px;">Web Services</div>
<div class="t" style="left:441px;top:251px;">Pre/Post Build Actions</div>
<div class="t" style="left:441px;top:267px;">Preview</div>
<div class="a" style="left:637px;top:40px;width:626px;height:25px;background:#0078d7"></div>
<div class="t" style="left:637px;top:44px;width:626px;text-align:center;color:#fff;font-size:13px">Information</div>
<div class="t" style="left:641px;top:78px;">Build specification name</div>
<div class="a" style="left:640px;top:94px;width:620px;height:21px;border:1px solid #abadb3;background:#fff"></div>
<div class="t" style="left:644px;top:99px;">myBuildSpec</div>
<div class="t" style="left:641px;top:124px;">Target filename</div>
<div class="a" style="left:640px;top:140px;width:620px;height:21px;border:1px solid #abadb3;background:#fff"></div>
<div class="t" style="left:644px;top:145px;">Application.exe</div>
<div class="t" style="left:641px;top:173px;">Destination directory</div>
<div class="a" style="left:640px;top:190px;width:585px;height:48px;border:1px solid #abadb3;background:#fff"></div>
<div class="t" style="left:644px;top:194px;">C:\Windows\Temp\Jenkins</div>
<div class="a" style="left:1228px;top:190px;width:31px;height:18px;border:1px solid #adadad;background:#e1e1e1"></div>
<svg class="a" style="left:1236px;top:194px" width="18" height="9" viewBox="0 0 18 9" shape-rendering="crispEdges"><rect x="1" y="0" width="4" height="1" fill="#000"/><rect x="0" y="1" width="1" height="1" fill="#000"/><rect x="1" y="1" width="4" height="1" fill="#ffff00"/><rect x="5" y="1" width="1" height="1" fill="#000"/><rect x="0" y="2" width="1" height="1" fill="#000"/><rect x="1" y="2" width="5" height="1" fill="#ffff00"/><rect x="6" y="2" width="6" height="1" fill="#000"/><rect x="0" y="3" width="1" height="1" fill="#000"/><rect x="1" y="3" width="10" height="1" fill="#ffff00"/><rect x="11" y="3" width="1" height="1" fill="#000"/><rect x="0" y="4" width="1" height="1" fill="#000"/><rect x="1" y="4" width="2" height="1" fill="#ffff00"/><rect x="3" y="4" width="13" height="1" fill="#000"/><rect x="0" y="5" width="1" height="1" fill="#000"/><rect x="1" y="5" width="1" height="1" fill="#ffff00"/><rect x="2" y="5" width="1" height="1" fill="#000"/><rect x="3" y="5" width="11" height="1" fill="#606060"/><rect x="14" y="5" width="1" height="1" fill="#000"/><rect x="0" y="6" width="2" height="1" fill="#000"/><rect x="2" y="6" width="11" height="1" fill="#606060"/><rect x="13" y="6" width="1" height="1" fill="#000"/><rect x="0" y="7" width="1" height="1" fill="#000"/><rect x="1" y="7" width="11" height="1" fill="#606060"/><rect x="12" y="7" width="1" height="1" fill="#000"/><rect x="0" y="8" width="12" height="1" fill="#000"/></svg>
<div class="t" style="left:643px;top:251px;">Build specification description</div>
<div class="a" style="left:640px;top:268px;width:620px;height:80px;border:1px solid #abadb3;background:#fff"></div>
<div class="a" style="left:1241px;top:270px;width:16px;height:75px;background:#f0f0f0"></div>
<svg class="a" style="left:1244px;top:277px" width="10" height="7" viewBox="0 0 10 7"><path d="M1.5 5.5L5 2L8.5 5.5" fill="none" stroke="#505050" stroke-width="1.7"/></svg>
<svg class="a" style="left:1244px;top:332px" width="10" height="7" viewBox="0 0 10 7"><path d="M1.5 1.5L5 5L8.5 1.5" fill="none" stroke="#505050" stroke-width="1.7"/></svg>
<div class="a" style="left:947px;top:543px;width:73px;height:21px;border:1px solid #adadad;background:#e1e1e1"></div>
<div class="t" style="left:947px;top:547px;width:73px;text-align:center">Build</div>
<div class="a" style="left:1027px;top:543px;width:73px;height:21px;border:1px solid #adadad;background:#e1e1e1"></div>
<div class="t" style="left:1027px;top:547px;width:73px;text-align:center">OK</div>
<div class="a" style="left:1107px;top:543px;width:73px;height:21px;border:1px solid #adadad;background:#e1e1e1"></div>
<div class="t" style="left:1107px;top:547px;width:73px;text-align:center">Cancel</div>
<div class="a" style="left:1187px;top:543px;width:73px;height:21px;border:1px solid #adadad;background:#e1e1e1"></div>
<div class="t" style="left:1187px;top:547px;width:73px;text-align:center">Help</div>
</body></html>
